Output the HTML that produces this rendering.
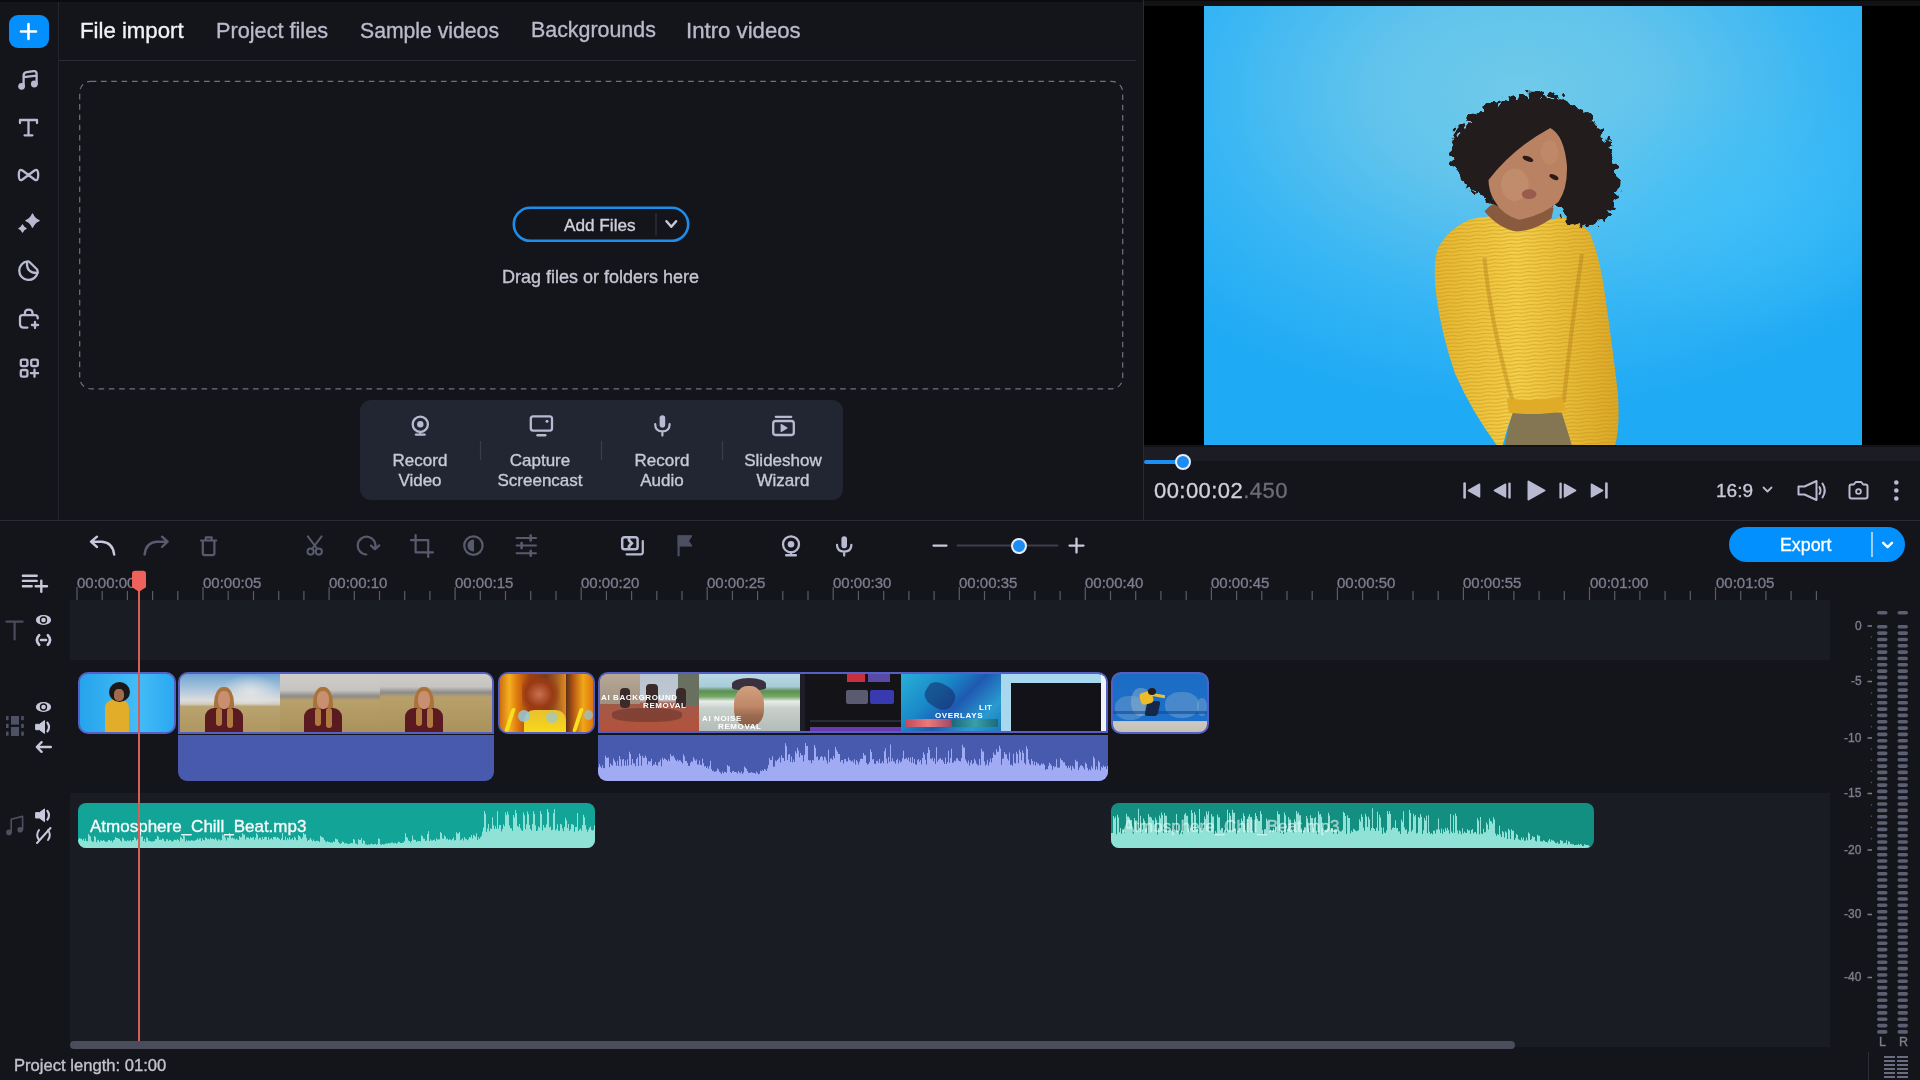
<!DOCTYPE html>
<html><head><meta charset="utf-8">
<style>
*{margin:0;padding:0;box-sizing:border-box}
html,body{width:1920px;height:1080px;overflow:hidden;background:#14151a;font-family:"Liberation Sans",sans-serif}
.a{position:absolute}
.ic{position:absolute;overflow:visible}
.t{position:absolute;white-space:pre;line-height:1;-webkit-text-stroke:0.35px currentColor;will-change:transform}
</style></head><body>
<!-- top strip -->
<div class="a" style="left:0;top:0;width:1920px;height:2px;background:#0b0b0e"></div>
<!-- sidebar separator -->
<div class="a" style="left:58px;top:2px;width:1px;height:518px;background:#24252c"></div>
<!-- tab underline -->
<div class="a" style="left:59px;top:60px;width:1077px;height:1px;background:#2b2d39"></div>
<!-- preview separator -->
<div class="a" style="left:1143px;top:0;width:1px;height:520px;background:#2a2b31"></div>
<!-- timeline separator -->
<div class="a" style="left:0;top:520px;width:1920px;height:1px;background:#2a2b33"></div>

<!-- SIDEBAR -->
<svg class="ic" style="left:0;top:0" width="58" height="400" fill="none" stroke="#b9bad2" stroke-width="2.3" stroke-linecap="round" stroke-linejoin="round">
<rect x="9" y="15" width="40" height="33" rx="9" fill="#0390fe" stroke="none"/>
<path d="M28.5 24V39M21 31.5H36" stroke="#fff" stroke-width="2.6"/>
<circle cx="21.6" cy="86.3" r="3.4" fill="#b9bad2" stroke="none"/>
<circle cx="34.3" cy="84" r="3.4" fill="#b9bad2" stroke="none"/>
<path d="M23.6 86V75.5Q23.6 72.6 26.6 72.2L33.6 71.2Q36.6 70.8 36.6 73.8V84M23.8 77.2L36.4 75.6"/>
<path d="M20 123V120H37V123M28.5 120V135.3M24.6 135.3H32.4"/>
<path d="M22.5 170.5L34.5 179.5Q38.2 182 38.2 175Q38.2 168 34.5 170.5L22.5 179.5Q18.8 182 18.8 175Q18.8 168 22.5 170.5Z"/>
<path d="M32.5 214Q34.3 218.8 39.1 220.6Q34.3 222.4 32.5 227.2Q30.7 222.4 25.9 220.6Q30.7 218.8 32.5 214Z" fill="#b9bad2" stroke-width="1.3"/>
<path d="M22.5 224.9Q23.6 227.4 26.1 228.5Q23.6 229.6 22.5 232.1Q21.4 229.6 18.9 228.5Q21.4 227.4 22.5 224.9Z" fill="#b9bad2" stroke-width="1.3"/>
<path d="M37.7 272.2A9.3 9.3 0 1 1 27.6 261.4Q28.6 261.2 29.5 262L36.9 269.3Q37.8 270.4 37.7 272.2Z"/>
<path d="M27 262.2Q26.4 273.4 37.4 273"/>
<path d="M27.4 327.6H23.8Q20 327.6 20 323.8V317.6Q20 315.2 22.4 315.2H35.2Q37.7 315.2 37.7 317.6V318.4M24.9 315V313.3Q24.9 309.7 28.7 309.7Q32.5 309.7 32.5 313.3V315M35 321.9V328.1M31.9 325H38.1"/>
<rect x="20.8" y="359.6" width="6.6" height="6.6" rx="1.6"/>
<rect x="31.2" y="359.6" width="6.6" height="6.6" rx="1.6"/>
<rect x="20.8" y="370" width="6.6" height="6.6" rx="1.6"/>
<path d="M34.5 369.6V376.8M30.9 373.2H38.1"/>
</svg>

<!-- TABS -->
<div class="t" style="left:80px;top:20px;font-size:22.2px;color:#f2f2f6">File import</div>
<div class="t" style="left:216px;top:20px;font-size:21.7px;color:#b9bacb">Project files</div>
<div class="t" style="left:360px;top:20px;font-size:21.2px;color:#b9bacb">Sample videos</div>
<div class="t" style="left:531px;top:20px;font-size:21.4px;color:#b9bacb">Backgrounds</div>
<div class="t" style="left:686px;top:20px;font-size:22.2px;color:#b9bacb">Intro videos</div>

<!-- DROP ZONE -->
<svg class="ic" style="left:0;top:0" width="1143" height="520">
<rect x="79.7" y="81.3" width="1043" height="307.5" rx="11" ry="11" fill="none" stroke="#70717d" stroke-width="1.2" stroke-dasharray="5.6 4.7"/>
<rect x="513.8" y="207.8" width="174.4" height="33" rx="16.5" fill="none" stroke="#1f8ce9" stroke-width="2.6"/>
<path d="M656 213V235.5" stroke="#3a3b46" stroke-width="1"/>
<path d="M666.5 221.3L671.3 226.8L676.1 221.3" fill="none" stroke="#c8c8d8" stroke-width="2.5" stroke-linecap="round" stroke-linejoin="round"/>
<rect x="360" y="400" width="483" height="100" rx="11" fill="#222632"/>
<path d="M480.5 441V460M601.5 441V460M722.5 441V460" stroke="#3a3d4a" stroke-width="1.2"/>
</svg>
<div class="t" style="left:564px;top:216.5px;font-size:17.2px;color:#d0d0dc">Add Files</div>
<div class="t" style="left:502px;top:268px;font-size:18px;color:#c4c5d3">Drag files or folders here</div>

<!-- RECORD BUTTONS -->
<svg class="ic" style="left:0;top:0" width="1143" height="520" fill="none" stroke="#b9bad2" stroke-linecap="round" stroke-linejoin="round">
<circle cx="420.3" cy="424.3" r="7.6" stroke-width="2.3"/>
<circle cx="420.3" cy="424.3" r="3.2" fill="#b9bad2" stroke="none"/>
<path d="M416 434.6H424.6" stroke-width="2.4"/>
<path d="M420.3 432V434" stroke-width="2"/>
<rect x="530.8" y="416.4" width="21.2" height="14.2" rx="2.4" stroke-width="2.3"/>
<circle cx="547" cy="421.2" r="1.5" fill="#b9bad2" stroke="none"/>
<path d="M537.5 435.2H545.3" stroke-width="2.4"/>
<rect x="659.6" y="415.2" width="5.6" height="12.4" rx="2.8" fill="#b9bad2" stroke="none"/>
<path d="M655.2 424.2Q655.2 431.4 662.4 431.4Q669.6 431.4 669.6 424.2M662.4 431.4V435.6" stroke-width="2.2"/>
<path d="M775.8 416.8H791.2" stroke-width="2.3"/>
<rect x="773.2" y="421" width="20.6" height="14" rx="2.4" stroke-width="2.3"/>
<path d="M781.2 424.6V431.4L787 428Z" fill="#b9bad2" stroke-width="1.2"/>
</svg>
<div class="t" style="left:380px;top:451px;width:80px;text-align:center;font-size:17px;line-height:20.3px;color:#c8c9d8;white-space:pre">Record
Video</div>
<div class="t" style="left:490px;top:451px;width:100px;text-align:center;font-size:17px;line-height:20.3px;color:#c8c9d8;white-space:pre">Capture
Screencast</div>
<div class="t" style="left:621.5px;top:451px;width:80px;text-align:center;font-size:17px;line-height:20.3px;color:#c8c9d8;white-space:pre">Record
Audio</div>
<div class="t" style="left:732.5px;top:451px;width:100px;text-align:center;font-size:17px;line-height:20.3px;color:#c8c9d8;white-space:pre">Slideshow
Wizard</div>
<!-- PREVIEW -->
<div class="a" style="left:1144px;top:0;width:776px;height:445px;background:#000"></div>
<div class="a" style="left:1144px;top:0;width:776px;height:6px;background:#131316"></div>
<div class="a" style="left:1144px;top:0;width:776px;height:1px;background:#08080a"></div>
<svg class="ic" style="left:1204px;top:6px" width="658" height="439" viewBox="0 0 1619 1080" preserveAspectRatio="none">
<defs>
<radialGradient id="bg1" cx="0.48" cy="0.2" r="0.72">
<stop offset="0" stop-color="#70caea"/>
<stop offset="0.3" stop-color="#62c4ec"/>
<stop offset="0.66" stop-color="#38b6f4"/>
<stop offset="1" stop-color="#1eaaf4"/>
</radialGradient>
<radialGradient id="bg2" cx="0.8" cy="0.45" r="0.3">
<stop offset="0" stop-color="#40c2fa" stop-opacity="0.6"/>
<stop offset="1" stop-color="#40c2fa" stop-opacity="0"/>
</radialGradient>
<filter id="curl" x="-10%" y="-10%" width="120%" height="120%">
<feTurbulence type="turbulence" baseFrequency="0.035" numOctaves="2" seed="3" result="n"/>
<feDisplacementMap in="SourceGraphic" in2="n" scale="38" xChannelSelector="R" yChannelSelector="G"/>
</filter>
<pattern id="knit" width="40" height="9" patternUnits="userSpaceOnUse" patternTransform="rotate(-4)">
<rect width="40" height="9" fill="none"/>
<path d="M0 6.5Q10 8.5 20 6.5T40 6.5" stroke="#b88a18" stroke-width="2.6" fill="none" opacity="0.45"/>
</pattern>
<linearGradient id="sw" x1="0" y1="0" x2="1" y2="0">
<stop offset="0" stop-color="#e6b630"/>
<stop offset="0.45" stop-color="#f6d04a"/>
<stop offset="1" stop-color="#dca826"/>
</linearGradient>
</defs>
<rect width="1619" height="1080" fill="url(#bg1)"/>
<rect width="1619" height="1080" fill="url(#bg2)"/>
<path d="M740 1080L760 990L890 985L905 1080Z" fill="#857653"/>
<path d="M655 525Q700 512 745 522Q800 548 880 518Q925 528 950 560Q975 620 988 720Q1005 840 1018 950Q1024 1030 1012 1080H905Q890 1030 880 1000L760 1000Q745 1040 735 1080H720Q660 1000 618 905Q585 810 572 715Q562 640 575 598Q600 548 655 525Z" fill="url(#sw)"/><path d="M655 525Q700 512 745 522Q800 548 880 518Q925 528 950 560Q975 620 988 720Q1005 840 1018 950Q1024 1030 1012 1080H905Q890 1030 880 1000L760 1000Q745 1040 735 1080H720Q660 1000 618 905Q585 810 572 715Q562 640 575 598Q600 548 655 525Z" fill="url(#knit)"/>
<path d="M690 620Q705 780 760 975" stroke="#a87414" stroke-width="10" fill="none" opacity="0.35"/><path d="M930 610Q905 780 885 975" stroke="#a87414" stroke-width="10" fill="none" opacity="0.35"/>
<path d="M750 1000Q815 1010 890 995L880 960Q815 975 745 965Z" fill="#e0ac28"/>
<path d="M690 505Q725 548 770 555Q815 552 855 522L860 498Q820 470 760 470Q712 478 690 505Z" fill="#8a5a3e"/>
<path filter="url(#curl)" d="M640 270Q690 232 760 212Q830 200 890 225Q945 255 978 310Q1005 365 1010 425Q1010 478 982 508Q950 530 915 530Q885 520 872 492Q850 470 820 470Q760 480 720 482Q680 472 640 440Q605 395 598 345Q605 300 640 270Z" fill="#241d1d"/>
<path d="M700 428Q760 350 852 300Q886 318 893 392Q895 450 872 482Q835 514 775 526Q735 515 715 480Q700 455 700 428Z" fill="#b98262"/><ellipse cx="765" cy="440" rx="34" ry="40" fill="#cc9a7a" opacity="0.45"/><ellipse cx="850" cy="360" rx="22" ry="30" fill="#c89070" opacity="0.4"/>
<ellipse cx="797" cy="376" rx="14" ry="6" transform="rotate(22 797 376)" fill="#2a1a18"/><ellipse cx="861" cy="421" rx="12" ry="5.5" transform="rotate(25 861 421)" fill="#2a1a18"/><ellipse cx="800" cy="463" rx="18" ry="12" fill="#9a5a4c"/>
</svg>
<!-- slider band -->
<div class="a" style="left:1144px;top:445px;width:776px;height:16px;background:#1c1d24"></div>
<div class="a" style="left:1144px;top:445px;width:776px;height:2px;background:#121318"></div>
<div class="a" style="left:1144px;top:460px;width:40px;height:3.5px;background:#1e8ff2;border-radius:2px"></div>
<div class="a" style="left:1175px;top:453.5px;width:16px;height:16px;border-radius:50%;background:#1a8cf3;border:2.5px solid #e8ecf6"></div>
<div class="t" style="left:1154px;top:480px;font-size:22px;letter-spacing:0.45px;color:#d0d0da">00:00:02<span style="color:#6b6c78">.450</span></div>
<svg class="ic" style="left:1440px;top:470px" width="480" height="45" fill="#b9bad2" stroke="#b9bad2" stroke-linecap="round" stroke-linejoin="round">
<path d="M24.6 13.6V27.4" stroke-width="2.6"/>
<path d="M39.5 14.2L28.5 20.5L39.5 26.8Z" stroke-width="1.6"/>
<path d="M65.5 14.2L54.5 20.5L65.5 26.8Z" stroke-width="1.6"/>
<path d="M69.5 13.6V27.4" stroke-width="2.4"/>
<path d="M88.5 11.5L104.5 20.5L88.5 29.5Z" stroke-width="2"/>
<path d="M120.6 13.6V27.4" stroke-width="2.4"/>
<path d="M124.5 14.2L135.5 20.5L124.5 26.8Z" stroke-width="1.6"/>
<path d="M151.5 14.2L162.5 20.5L151.5 26.8Z" stroke-width="1.6"/>
<path d="M166.4 13.6V27.4" stroke-width="2.6"/>
<path d="M323.5 17.5L327.5 21.5L331.5 17.5" fill="none" stroke-width="1.8"/>
<path d="M358.5 16.5H364.5L376.5 11V30L364.5 24.5H358.5Q358.5 20.5 358.5 16.5Z" fill="none" stroke-width="2"/>
<path d="M379.5 17Q381.5 20.5 379.5 24M382.5 13.5Q387 20.5 382.5 27.5" fill="none" stroke-width="2"/>
<path d="M409.5 16.5Q409.5 14.5 411.5 14.5H413.8L415.8 12H421.2L423.2 14.5H425.5Q427.5 14.5 427.5 16.5V26.5Q427.5 28.5 425.5 28.5H411.5Q409.5 28.5 409.5 26.5Z" fill="none" stroke-width="2"/>
<circle cx="418.5" cy="21.5" r="2.4" fill="none" stroke-width="1.8"/>
<circle cx="456.3" cy="12.5" r="2.3" stroke="none"/>
<circle cx="456.3" cy="20.5" r="2.3" stroke="none"/>
<circle cx="456.3" cy="28.5" r="2.3" stroke="none"/>
</svg>
<div class="t" style="left:1716px;top:481px;font-size:19px;color:#c8c9d8">16:9</div>

<!-- TIMELINE TOOLBAR -->
<svg class="ic" style="left:0;top:521px" width="1100" height="80" fill="none" stroke-linecap="round" stroke-linejoin="round">
<g transform="translate(0,-521)">
<path d="M97 536.7L91 541.7L97 547M91.5 541.7H102Q112.8 542.5 114.2 554.6" stroke="#c8c8dc" stroke-width="2.4"/>
<path d="M162 536.7L167.6 541.7L162 547M167 541.7H156.5Q145.8 542.5 144.6 554.6" stroke="#595a6e" stroke-width="2.4"/>
<path d="M201 540.5H216.2M205.8 540V537.3H211.6V540M202.8 540.5V553.3Q202.8 555.2 204.7 555.2H212.5Q214.4 555.2 214.4 553.3V540.5" stroke="#595a6e" stroke-width="2.2"/>
<circle cx="310.6" cy="551.6" r="3.1" stroke="#595a6e" stroke-width="2"/>
<circle cx="318.8" cy="551.6" r="3.1" stroke="#595a6e" stroke-width="2"/>
<path d="M307.8 536.3L317.4 549M321.6 536.3L312 549" stroke="#595a6e" stroke-width="2"/>
<path d="M366.3 554.5A8.9 8.9 0 1 1 375 548.6" stroke="#595a6e" stroke-width="2.2"/><path d="M371 545.6L375 549.2L379.3 545.4" stroke="#595a6e" stroke-width="2.2"/>
<path d="M415.6 535.2V552.3H433M411 540.2H428.2V557" stroke="#595a6e" stroke-width="2.2"/>
<circle cx="473.4" cy="545.6" r="9.2" stroke="#595a6e" stroke-width="2.2"/>
<path d="M473.4 540.2A5.4 5.4 0 0 0 473.4 551Z" fill="#595a6e" stroke="#595a6e" stroke-width="1.2"/>
<path d="M516.5 538H536M516.5 545.6H536M516.5 553.2H536" stroke="#595a6e" stroke-width="2"/>
<path d="M530.7 535.5V540.5M521.6 543.1V548.1M530.7 550.7V555.7" stroke="#595a6e" stroke-width="2.6"/>
<rect x="622.2" y="537.2" width="15.4" height="12" rx="2.3" stroke="#b9bad2" stroke-width="2.5"/>
<path d="M629 537.6V540.2L631.8 543.2L629 546.2V548.8" stroke="#b9bad2" stroke-width="2.8" stroke-linejoin="miter"/>
<path d="M626.6 554.3H640.8Q642.8 554.3 642.8 552.3V541" stroke="#b9bad2" stroke-width="2.2"/>
<path d="M678.6 555.5V536" stroke="#4c4e62" stroke-width="2.2"/>
<path d="M678.6 535.7H692L688.6 540.9L692 546.1H678.6Z" fill="#4c4e62" stroke="#4c4e62" stroke-width="1"/>
<circle cx="791" cy="544.3" r="8" stroke="#b9bad2" stroke-width="2.3"/>
<circle cx="791" cy="544.3" r="3.3" fill="#b9bad2" stroke="none"/>
<path d="M786.2 555.2H795.8" stroke="#b9bad2" stroke-width="2.4"/>
<path d="M791 552V555" stroke="#b9bad2" stroke-width="2"/>
<rect x="841.4" y="536.2" width="5.6" height="12" rx="2.8" fill="#b9bad2" stroke="none"/>
<path d="M837 544.8Q837 551.6 844.2 551.6Q851.4 551.6 851.4 544.8M844.2 551.6V555.6" stroke="#b9bad2" stroke-width="2.2"/>
<path d="M933.5 545.6H946.5" stroke="#c8c8dc" stroke-width="2.3"/>
<path d="M957.5 545.6H1057.5" stroke="#3c3e4a" stroke-width="2"/>
<path d="M1069.5 545.6H1083.5M1076.5 538.6V552.6" stroke="#c8c8dc" stroke-width="2.3"/>
<path d="M22.9 575.8H36.7M22.9 580.9H36.7M22.9 586.2H31.7M35.7 586.2H47M41.3 580.6V591.8" stroke="#c8c8dc" stroke-width="2.4"/>
</g>
</svg>
<div class="a" style="left:1010.5px;top:537.5px;width:16.5px;height:16.5px;border-radius:50%;background:#1a8cf3;border:2.5px solid #e8ecf6"></div>
<!-- export -->
<div class="a" style="left:1729px;top:527px;width:176px;height:35px;border-radius:18px;background:#0190fe"></div>
<div class="a" style="left:1871px;top:532px;width:1.8px;height:25px;background:#9ccffb"></div>
<div class="t" style="left:1780px;top:536.5px;font-size:17.8px;color:#fff">Export</div>
<svg class="ic" style="left:1880px;top:538px" width="20" height="14" fill="none"><path d="M3.2 4.8L7.6 9.2L12 4.8" stroke="#fff" stroke-width="2.4" stroke-linecap="round" stroke-linejoin="round"/></svg>
<!-- RULER -->
<div class="t" style="left:77.0px;top:575px;font-size:15px;color:#7c7d8f">00:00:00</div>
<div class="t" style="left:203.0px;top:575px;font-size:15px;color:#7c7d8f">00:00:05</div>
<div class="t" style="left:329.1px;top:575px;font-size:15px;color:#7c7d8f">00:00:10</div>
<div class="t" style="left:455.1px;top:575px;font-size:15px;color:#7c7d8f">00:00:15</div>
<div class="t" style="left:581.2px;top:575px;font-size:15px;color:#7c7d8f">00:00:20</div>
<div class="t" style="left:707.2px;top:575px;font-size:15px;color:#7c7d8f">00:00:25</div>
<div class="t" style="left:833.2px;top:575px;font-size:15px;color:#7c7d8f">00:00:30</div>
<div class="t" style="left:959.3px;top:575px;font-size:15px;color:#7c7d8f">00:00:35</div>
<div class="t" style="left:1085.3px;top:575px;font-size:15px;color:#7c7d8f">00:00:40</div>
<div class="t" style="left:1211.4px;top:575px;font-size:15px;color:#7c7d8f">00:00:45</div>
<div class="t" style="left:1337.4px;top:575px;font-size:15px;color:#7c7d8f">00:00:50</div>
<div class="t" style="left:1463.4px;top:575px;font-size:15px;color:#7c7d8f">00:00:55</div>
<div class="t" style="left:1589.5px;top:575px;font-size:15px;color:#7c7d8f">00:01:00</div>
<div class="t" style="left:1715.5px;top:575px;font-size:15px;color:#7c7d8f">00:01:05</div>
<svg class="ic" style="left:0;top:0" width="1920" height="1080"><path d="M77.0 587V600M102.2 591V600M127.4 591V600M152.6 591V600M177.8 591V600M203.0 587V600M228.2 591V600M253.5 591V600M278.7 591V600M303.9 591V600M329.1 587V600M354.3 591V600M379.5 591V600M404.7 591V600M429.9 591V600M455.1 587V600M480.3 591V600M505.5 591V600M530.7 591V600M556.0 591V600M581.2 587V600M606.4 591V600M631.6 591V600M656.8 591V600M682.0 591V600M707.2 587V600M732.4 591V600M757.6 591V600M782.8 591V600M808.0 591V600M833.2 587V600M858.4 591V600M883.7 591V600M908.9 591V600M934.1 591V600M959.3 587V600M984.5 591V600M1009.7 591V600M1034.9 591V600M1060.1 591V600M1085.3 587V600M1110.5 591V600M1135.7 591V600M1160.9 591V600M1186.2 591V600M1211.4 587V600M1236.6 591V600M1261.8 591V600M1287.0 591V600M1312.2 591V600M1337.4 587V600M1362.6 591V600M1387.8 591V600M1413.0 591V600M1438.2 591V600M1463.4 587V600M1488.6 591V600M1513.9 591V600M1539.1 591V600M1564.3 591V600M1589.5 587V600M1614.7 591V600M1639.9 591V600M1665.1 591V600M1690.3 591V600M1715.5 587V600M1740.7 591V600M1765.9 591V600M1791.1 591V600M1816.4 591V600" stroke="#5a5b68" stroke-width="1.2"/></svg>
<!-- TRACK BGS -->
<div class="a" style="left:70px;top:600px;width:1760px;height:60px;background:#1a1c23"></div>
<div class="a" style="left:70px;top:793px;width:1760px;height:254px;background:#1a1c23"></div>
<div class="a" style="left:70px;top:1041px;width:1445px;height:7.5px;border-radius:4px;background:#4a4d5b"></div>
<div class="t" style="left:14px;top:1057.5px;font-size:16.6px;color:#c4c4cc">Project length: 01:00</div>
<!-- CLIPS -->
<!-- clip2 audio -->
<div class="a" style="left:178px;top:735px;width:316px;height:46px;background:#475aae;border-radius:0 0 9px 9px"></div>
<!-- clip4 audio -->
<div class="a" style="left:598px;top:735px;width:510px;height:46px;background:#475aae;border-radius:0 0 9px 9px;overflow:hidden"></div>
<!-- teal audio -->
<div class="a" style="left:78px;top:803px;width:517px;height:45px;background:#12a497;border-radius:8px"></div>
<div class="a" style="left:1111px;top:803px;width:483px;height:45px;background:#138f81;border-radius:8px"></div>
<svg class="ic" style="left:0;top:0" width="1920" height="1080">
<defs>
<clipPath id="c4"><rect x="598" y="735" width="510" height="46" rx="9"/></clipPath>
<clipPath id="ct1"><rect x="78" y="803" width="517" height="45" rx="8"/></clipPath>
<clipPath id="ct2"><rect x="1111" y="803" width="483" height="45" rx="8"/></clipPath>
</defs>
<path d="M598.0 781L598.0 767.3L599.0 767.3L599.0 764.3L600.0 764.3L600.0 766.4L601.0 766.4L601.0 768.1L602.0 768.1L602.0 765.2L603.0 765.2L603.0 768.2L604.0 768.2L604.0 768.0L605.0 768.0L605.0 755.8L606.0 755.8L606.0 757.8L607.0 757.8L607.0 757.8L608.0 757.8L608.0 757.5L609.0 757.5L609.0 767.3L610.0 767.3L610.0 763.2L611.0 763.2L611.0 764.9L612.0 764.9L612.0 765.5L613.0 765.5L613.0 758.6L614.0 758.6L614.0 760.4L615.0 760.4L615.0 762.2L616.0 762.2L616.0 765.7L617.0 765.7L617.0 760.7L618.0 760.7L618.0 766.1L619.0 766.1L619.0 756.0L620.0 756.0L620.0 759.3L621.0 759.3L621.0 766.3L622.0 766.3L622.0 759.6L623.0 759.6L623.0 759.1L624.0 759.1L624.0 765.8L625.0 765.8L625.0 760.6L626.0 760.6L626.0 765.7L627.0 765.7L627.0 759.2L628.0 759.2L628.0 765.4L629.0 765.4L629.0 751.7L630.0 751.7L630.0 754.0L631.0 754.0L631.0 764.9L632.0 764.9L632.0 759.1L633.0 759.1L633.0 763.2L634.0 763.2L634.0 763.4L635.0 763.4L635.0 766.3L636.0 766.3L636.0 759.1L637.0 759.1L637.0 757.2L638.0 757.2L638.0 766.0L639.0 766.0L639.0 753.5L640.0 753.5L640.0 755.7L641.0 755.7L641.0 765.8L642.0 765.8L642.0 755.7L643.0 755.7L643.0 757.8L644.0 757.8L644.0 757.8L645.0 757.8L645.0 755.6L646.0 755.6L646.0 757.7L647.0 757.7L647.0 764.6L648.0 764.6L648.0 761.0L649.0 761.0L649.0 761.7L650.0 761.7L650.0 761.3L651.0 761.3L651.0 758.7L652.0 758.7L652.0 766.0L653.0 766.0L653.0 764.5L654.0 764.5L654.0 764.4L655.0 764.4L655.0 761.9L656.0 761.9L656.0 765.0L657.0 765.0L657.0 765.8L658.0 765.8L658.0 762.2L659.0 762.2L659.0 761.8L660.0 761.8L660.0 759.6L661.0 759.6L661.0 766.2L662.0 766.2L662.0 757.8L663.0 757.8L663.0 759.7L664.0 759.7L664.0 758.2L665.0 758.2L665.0 759.1L666.0 759.1L666.0 760.0L667.0 760.0L667.0 761.2L668.0 761.2L668.0 759.3L669.0 759.3L669.0 761.0L670.0 761.0L670.0 754.0L671.0 754.0L671.0 756.2L672.0 756.2L672.0 756.2L673.0 756.2L673.0 755.6L674.0 755.6L674.0 757.7L675.0 757.7L675.0 759.7L676.0 759.7L676.0 761.1L677.0 761.1L677.0 759.6L678.0 759.6L678.0 761.3L679.0 761.3L679.0 759.9L680.0 759.9L680.0 760.5L681.0 760.5L681.0 762.1L682.0 762.1L682.0 763.5L683.0 763.5L683.0 754.3L684.0 754.3L684.0 756.4L685.0 756.4L685.0 760.9L686.0 760.9L686.0 760.9L687.0 760.9L687.0 763.1L688.0 763.1L688.0 765.7L689.0 765.7L689.0 766.1L690.0 766.1L690.0 762.8L691.0 762.8L691.0 761.2L692.0 761.2L692.0 761.8L693.0 761.8L693.0 757.3L694.0 757.3L694.0 759.2L695.0 759.2L695.0 760.8L696.0 760.8L696.0 759.5L697.0 759.5L697.0 764.5L698.0 764.5L698.0 764.5L699.0 764.5L699.0 760.4L700.0 760.4L700.0 764.8L701.0 764.8L701.0 765.3L702.0 765.3L702.0 758.4L703.0 758.4L703.0 763.2L704.0 763.2L704.0 766.6L705.0 766.6L705.0 766.1L706.0 766.1L706.0 768.1L707.0 768.1L707.0 766.4L708.0 766.4L708.0 768.7L709.0 768.7L709.0 766.0L710.0 766.0L710.0 760.8L711.0 760.8L711.0 768.9L712.0 768.9L712.0 770.9L713.0 770.9L713.0 770.7L714.0 770.7L714.0 772.0L715.0 772.0L715.0 771.3L716.0 771.3L716.0 771.3L717.0 771.3L717.0 768.5L718.0 768.5L718.0 769.5L719.0 769.5L719.0 771.7L720.0 771.7L720.0 772.4L721.0 772.4L721.0 774.1L722.0 774.1L722.0 771.6L723.0 771.6L723.0 773.2L724.0 773.2L724.0 771.7L725.0 771.7L725.0 772.1L726.0 772.1L726.0 772.8L727.0 772.8L727.0 765.1L728.0 765.1L728.0 766.3L729.0 766.3L729.0 766.3L730.0 766.3L730.0 772.1L731.0 772.1L731.0 773.0L732.0 773.0L732.0 771.3L733.0 771.3L733.0 771.1L734.0 771.1L734.0 772.1L735.0 772.1L735.0 771.9L736.0 771.9L736.0 772.2L737.0 772.2L737.0 773.6L738.0 773.6L738.0 771.1L739.0 771.1L739.0 772.6L740.0 772.6L740.0 773.3L741.0 773.3L741.0 771.6L742.0 771.6L742.0 774.1L743.0 774.1L743.0 772.6L744.0 772.6L744.0 766.4L745.0 766.4L745.0 767.7L746.0 767.7L746.0 768.7L747.0 768.7L747.0 771.2L748.0 771.2L748.0 772.8L749.0 772.8L749.0 773.1L750.0 773.1L750.0 772.7L751.0 772.7L751.0 772.1L752.0 772.1L752.0 772.8L753.0 772.8L753.0 772.8L754.0 772.8L754.0 773.0L755.0 773.0L755.0 773.8L756.0 773.8L756.0 771.6L757.0 771.6L757.0 772.7L758.0 772.7L758.0 774.2L759.0 774.2L759.0 773.8L760.0 773.8L760.0 770.5L761.0 770.5L761.0 771.3L762.0 771.3L762.0 769.9L763.0 769.9L763.0 770.9L764.0 770.9L764.0 768.9L765.0 768.9L765.0 769.5L766.0 769.5L766.0 770.9L767.0 770.9L767.0 768.5L768.0 768.5L768.0 765.0L769.0 765.0L769.0 758.1L770.0 758.1L770.0 759.9L771.0 759.9L771.0 759.9L772.0 759.9L772.0 756.2L773.0 756.2L773.0 766.8L774.0 766.8L774.0 766.4L775.0 766.4L775.0 760.4L776.0 760.4L776.0 761.3L777.0 761.3L777.0 759.9L778.0 759.9L778.0 758.7L779.0 758.7L779.0 757.2L780.0 757.2L780.0 762.6L781.0 762.6L781.0 755.3L782.0 755.3L782.0 758.0L783.0 758.0L783.0 758.0L784.0 758.0L784.0 760.9L785.0 760.9L785.0 743.2L786.0 743.2L786.0 746.2L787.0 746.2L787.0 760.1L788.0 760.1L788.0 754.7L789.0 754.7L789.0 754.1L790.0 754.1L790.0 761.9L791.0 761.9L791.0 756.6L792.0 756.6L792.0 762.2L793.0 762.2L793.0 759.4L794.0 759.4L794.0 762.0L795.0 762.0L795.0 751.2L796.0 751.2L796.0 753.6L797.0 753.6L797.0 747.8L798.0 747.8L798.0 750.5L799.0 750.5L799.0 757.2L800.0 757.2L800.0 753.0L801.0 753.0L801.0 755.3L802.0 755.3L802.0 755.3L803.0 755.3L803.0 761.6L804.0 761.6L804.0 754.7L805.0 754.7L805.0 743.0L806.0 743.0L806.0 746.1L807.0 746.1L807.0 746.1L808.0 746.1L808.0 760.1L809.0 760.1L809.0 760.5L810.0 760.5L810.0 760.3L811.0 760.3L811.0 763.3L812.0 763.3L812.0 760.1L813.0 760.1L813.0 760.5L814.0 760.5L814.0 744.9L815.0 744.9L815.0 747.8L816.0 747.8L816.0 756.8L817.0 756.8L817.0 756.4L818.0 756.4L818.0 760.3L819.0 760.3L819.0 759.5L820.0 759.5L820.0 756.9L821.0 756.9L821.0 756.1L822.0 756.1L822.0 757.3L823.0 757.3L823.0 760.5L824.0 760.5L824.0 756.5L825.0 756.5L825.0 757.5L826.0 757.5L826.0 760.6L827.0 760.6L827.0 763.4L828.0 763.4L828.0 749.8L829.0 749.8L829.0 762.1L830.0 762.1L830.0 758.5L831.0 758.5L831.0 758.6L832.0 758.6L832.0 759.7L833.0 759.7L833.0 755.8L834.0 755.8L834.0 758.3L835.0 758.3L835.0 747.1L836.0 747.1L836.0 749.8L837.0 749.8L837.0 751.7L838.0 751.7L838.0 754.0L839.0 754.0L839.0 754.0L840.0 754.0L840.0 762.1L841.0 762.1L841.0 759.9L842.0 759.9L842.0 760.1L843.0 760.1L843.0 763.6L844.0 763.6L844.0 759.2L845.0 759.2L845.0 759.0L846.0 759.0L846.0 761.4L847.0 761.4L847.0 761.4L848.0 761.4L848.0 757.6L849.0 757.6L849.0 759.7L850.0 759.7L850.0 760.6L851.0 760.6L851.0 761.4L852.0 761.4L852.0 760.4L853.0 760.4L853.0 762.5L854.0 762.5L854.0 759.3L855.0 759.3L855.0 764.6L856.0 764.6L856.0 760.0L857.0 760.0L857.0 761.5L858.0 761.5L858.0 764.4L859.0 764.4L859.0 761.7L860.0 761.7L860.0 759.1L861.0 759.1L861.0 758.5L862.0 758.5L862.0 759.1L863.0 759.1L863.0 752.9L864.0 752.9L864.0 755.2L865.0 755.2L865.0 755.2L866.0 755.2L866.0 762.9L867.0 762.9L867.0 764.5L868.0 764.5L868.0 764.0L869.0 764.0L869.0 762.0L870.0 762.0L870.0 749.5L871.0 749.5L871.0 752.0L872.0 752.0L872.0 759.4L873.0 759.4L873.0 758.9L874.0 758.9L874.0 763.8L875.0 763.8L875.0 763.9L876.0 763.9L876.0 760.9L877.0 760.9L877.0 760.8L878.0 760.8L878.0 762.7L879.0 762.7L879.0 759.1L880.0 759.1L880.0 763.4L881.0 763.4L881.0 763.0L882.0 763.0L882.0 760.9L883.0 760.9L883.0 763.3L884.0 763.3L884.0 751.2L885.0 751.2L885.0 748.2L886.0 748.2L886.0 758.8L887.0 758.8L887.0 763.6L888.0 763.6L888.0 757.0L889.0 757.0L889.0 762.0L890.0 762.0L890.0 744.6L891.0 744.6L891.0 761.3L892.0 761.3L892.0 758.2L893.0 758.2L893.0 761.3L894.0 761.3L894.0 761.8L895.0 761.8L895.0 763.7L896.0 763.7L896.0 760.1L897.0 760.1L897.0 758.8L898.0 758.8L898.0 763.4L899.0 763.4L899.0 760.2L900.0 760.2L900.0 762.3L901.0 762.3L901.0 761.4L902.0 761.4L902.0 758.3L903.0 758.3L903.0 750.7L904.0 750.7L904.0 759.3L905.0 759.3L905.0 758.7L906.0 758.7L906.0 757.8L907.0 757.8L907.0 759.6L908.0 759.6L908.0 757.6L909.0 757.6L909.0 761.4L910.0 761.4L910.0 757.6L911.0 757.6L911.0 762.7L912.0 762.7L912.0 756.9L913.0 756.9L913.0 763.1L914.0 763.1L914.0 759.0L915.0 759.0L915.0 764.2L916.0 764.2L916.0 764.7L917.0 764.7L917.0 760.2L918.0 760.2L918.0 759.0L919.0 759.0L919.0 761.8L920.0 761.8L920.0 760.1L921.0 760.1L921.0 764.2L922.0 764.2L922.0 758.1L923.0 758.1L923.0 752.3L924.0 752.3L924.0 754.6L925.0 754.6L925.0 759.7L926.0 759.7L926.0 764.5L927.0 764.5L927.0 753.1L928.0 753.1L928.0 747.2L929.0 747.2L929.0 749.9L930.0 749.9L930.0 758.5L931.0 758.5L931.0 759.3L932.0 759.3L932.0 757.8L933.0 757.8L933.0 761.4L934.0 761.4L934.0 758.6L935.0 758.6L935.0 764.0L936.0 764.0L936.0 747.3L937.0 747.3L937.0 761.8L938.0 761.8L938.0 759.8L939.0 759.8L939.0 758.7L940.0 758.7L940.0 758.1L941.0 758.1L941.0 760.1L942.0 760.1L942.0 759.5L943.0 759.5L943.0 761.8L944.0 761.8L944.0 764.0L945.0 764.0L945.0 757.4L946.0 757.4L946.0 763.9L947.0 763.9L947.0 761.9L948.0 761.9L948.0 750.7L949.0 750.7L949.0 762.8L950.0 762.8L950.0 758.0L951.0 758.0L951.0 748.8L952.0 748.8L952.0 762.8L953.0 762.8L953.0 762.5L954.0 762.5L954.0 760.6L955.0 760.6L955.0 761.3L956.0 761.3L956.0 758.3L957.0 758.3L957.0 758.2L958.0 758.2L958.0 760.4L959.0 760.4L959.0 761.0L960.0 761.0L960.0 761.6L961.0 761.6L961.0 757.9L962.0 757.9L962.0 744.7L963.0 744.7L963.0 747.6L964.0 747.6L964.0 747.6L965.0 747.6L965.0 759.2L966.0 759.2L966.0 761.3L967.0 761.3L967.0 763.3L968.0 763.3L968.0 760.4L969.0 760.4L969.0 765.4L970.0 765.4L970.0 762.6L971.0 762.6L971.0 760.0L972.0 760.0L972.0 764.3L973.0 764.3L973.0 763.0L974.0 763.0L974.0 758.8L975.0 758.8L975.0 760.6L976.0 760.6L976.0 763.5L977.0 763.5L977.0 764.4L978.0 764.4L978.0 765.6L979.0 765.6L979.0 759.1L980.0 759.1L980.0 765.0L981.0 765.0L981.0 748.8L982.0 748.8L982.0 751.4L983.0 751.4L983.0 751.4L984.0 751.4L984.0 761.5L985.0 761.5L985.0 765.5L986.0 765.5L986.0 764.2L987.0 764.2L987.0 759.7L988.0 759.7L988.0 765.4L989.0 765.4L989.0 761.9L990.0 761.9L990.0 758.4L991.0 758.4L991.0 762.6L992.0 762.6L992.0 758.1L993.0 758.1L993.0 752.5L994.0 752.5L994.0 754.8L995.0 754.8L995.0 754.8L996.0 754.8L996.0 749.2L997.0 749.2L997.0 751.7L998.0 751.7L998.0 751.7L999.0 751.7L999.0 745.7L1000.0 745.7L1000.0 748.5L1001.0 748.5L1001.0 764.7L1002.0 764.7L1002.0 758.8L1003.0 758.8L1003.0 758.6L1004.0 758.6L1004.0 752.0L1005.0 752.0L1005.0 754.3L1006.0 754.3L1006.0 754.3L1007.0 754.3L1007.0 758.8L1008.0 758.8L1008.0 760.5L1009.0 760.5L1009.0 752.5L1010.0 752.5L1010.0 765.0L1011.0 765.0L1011.0 764.6L1012.0 764.6L1012.0 765.7L1013.0 765.7L1013.0 753.7L1014.0 753.7L1014.0 762.7L1015.0 762.7L1015.0 763.4L1016.0 763.4L1016.0 751.8L1017.0 751.8L1017.0 754.1L1018.0 754.1L1018.0 763.2L1019.0 763.2L1019.0 749.7L1020.0 749.7L1020.0 752.2L1021.0 752.2L1021.0 760.2L1022.0 760.2L1022.0 750.4L1023.0 750.4L1023.0 752.9L1024.0 752.9L1024.0 762.8L1025.0 762.8L1025.0 764.6L1026.0 764.6L1026.0 746.3L1027.0 746.3L1027.0 749.1L1028.0 749.1L1028.0 759.5L1029.0 759.5L1029.0 763.6L1030.0 763.6L1030.0 765.1L1031.0 765.1L1031.0 758.9L1032.0 758.9L1032.0 760.9L1033.0 760.9L1033.0 764.8L1034.0 764.8L1034.0 761.6L1035.0 761.6L1035.0 765.6L1036.0 765.6L1036.0 762.0L1037.0 762.0L1037.0 763.8L1038.0 763.8L1038.0 763.6L1039.0 763.6L1039.0 765.4L1040.0 765.4L1040.0 765.3L1041.0 765.3L1041.0 763.4L1042.0 763.4L1042.0 764.3L1043.0 764.3L1043.0 763.3L1044.0 763.3L1044.0 765.0L1045.0 765.0L1045.0 769.9L1046.0 769.9L1046.0 769.0L1047.0 769.0L1047.0 769.2L1048.0 769.2L1048.0 766.1L1049.0 766.1L1049.0 762.8L1050.0 762.8L1050.0 764.2L1051.0 764.2L1051.0 765.6L1052.0 765.6L1052.0 769.8L1053.0 769.8L1053.0 766.1L1054.0 766.1L1054.0 767.3L1055.0 767.3L1055.0 766.5L1056.0 766.5L1056.0 759.2L1057.0 759.2L1057.0 767.5L1058.0 767.5L1058.0 767.8L1059.0 767.8L1059.0 767.5L1060.0 767.5L1060.0 758.2L1061.0 758.2L1061.0 760.0L1062.0 760.0L1062.0 760.5L1063.0 760.5L1063.0 762.2L1064.0 762.2L1064.0 762.2L1065.0 762.2L1065.0 765.3L1066.0 765.3L1066.0 766.0L1067.0 766.0L1067.0 768.2L1068.0 768.2L1068.0 765.7L1069.0 765.7L1069.0 767.7L1070.0 767.7L1070.0 765.8L1071.0 765.8L1071.0 770.2L1072.0 770.2L1072.0 765.8L1073.0 765.8L1073.0 767.4L1074.0 767.4L1074.0 768.9L1075.0 768.9L1075.0 759.8L1076.0 759.8L1076.0 761.5L1077.0 761.5L1077.0 761.5L1078.0 761.5L1078.0 769.9L1079.0 769.9L1079.0 767.6L1080.0 767.6L1080.0 765.6L1081.0 765.6L1081.0 765.3L1082.0 765.3L1082.0 765.9L1083.0 765.9L1083.0 767.6L1084.0 767.6L1084.0 769.6L1085.0 769.6L1085.0 762.5L1086.0 762.5L1086.0 764.0L1087.0 764.0L1087.0 767.7L1088.0 767.7L1088.0 770.5L1089.0 770.5L1089.0 768.9L1090.0 768.9L1090.0 770.2L1091.0 770.2L1091.0 766.2L1092.0 766.2L1092.0 768.6L1093.0 768.6L1093.0 756.5L1094.0 756.5L1094.0 758.5L1095.0 758.5L1095.0 769.7L1096.0 769.7L1096.0 766.4L1097.0 766.4L1097.0 769.4L1098.0 769.4L1098.0 760.7L1099.0 760.7L1099.0 762.3L1100.0 762.3L1100.0 770.4L1101.0 770.4L1101.0 766.8L1102.0 766.8L1102.0 767.7L1103.0 767.7L1103.0 765.5L1104.0 765.5L1104.0 767.1L1105.0 767.1L1105.0 766.2L1106.0 766.2L1106.0 769.1L1107.0 769.1L1107.0 765.9L1108.0 765.9L1108.0 765.5L1109.0 765.5L1108.0 781Z" fill="#a0abf4" clip-path="url(#c4)"/>
<path d="M78.0 848L78.0 839.5L79.0 839.5L79.0 838.1L80.0 838.1L80.0 838.8L81.0 838.8L81.0 838.8L82.0 838.8L82.0 840.3L83.0 840.3L83.0 838.8L84.0 838.8L84.0 841.1L85.0 841.1L85.0 838.4L86.0 838.4L86.0 841.1L87.0 841.1L87.0 841.3L88.0 841.3L88.0 834.0L89.0 834.0L89.0 835.5L90.0 835.5L90.0 836.5L91.0 836.5L91.0 840.8L92.0 840.8L92.0 841.7L93.0 841.7L93.0 841.7L94.0 841.7L94.0 835.9L95.0 835.9L95.0 836.9L96.0 836.9L96.0 842.3L97.0 842.3L97.0 840.3L98.0 840.3L98.0 839.8L99.0 839.8L99.0 841.9L100.0 841.9L100.0 840.5L101.0 840.5L101.0 840.5L102.0 840.5L102.0 840.9L103.0 840.9L103.0 839.9L104.0 839.9L104.0 840.8L105.0 840.8L105.0 841.8L106.0 841.8L106.0 841.8L107.0 841.8L107.0 841.6L108.0 841.6L108.0 840.1L109.0 840.1L109.0 840.0L110.0 840.0L110.0 840.9L111.0 840.9L111.0 840.6L112.0 840.6L112.0 842.2L113.0 842.2L113.0 840.2L114.0 840.2L114.0 839.7L115.0 839.7L115.0 837.0L116.0 837.0L116.0 837.9L117.0 837.9L117.0 837.9L118.0 837.9L118.0 838.4L119.0 838.4L119.0 839.1L120.0 839.1L120.0 840.6L121.0 840.6L121.0 841.5L122.0 841.5L122.0 837.6L123.0 837.6L123.0 838.4L124.0 838.4L124.0 840.7L125.0 840.7L125.0 840.7L126.0 840.7L126.0 841.4L127.0 841.4L127.0 840.2L128.0 840.2L128.0 840.8L129.0 840.8L129.0 840.7L130.0 840.7L130.0 840.0L131.0 840.0L131.0 841.7L132.0 841.7L132.0 840.3L133.0 840.3L133.0 839.9L134.0 839.9L134.0 837.1L135.0 837.1L135.0 838.0L136.0 838.0L136.0 840.4L137.0 840.4L137.0 839.3L138.0 839.3L138.0 840.0L139.0 840.0L139.0 839.1L140.0 839.1L140.0 835.4L141.0 835.4L141.0 836.4L142.0 836.4L142.0 836.4L143.0 836.4L143.0 840.9L144.0 840.9L144.0 839.1L145.0 839.1L145.0 841.9L146.0 841.9L146.0 837.3L147.0 837.3L147.0 838.1L148.0 838.1L148.0 840.8L149.0 840.8L149.0 840.8L150.0 840.8L150.0 841.3L151.0 841.3L151.0 841.4L152.0 841.4L152.0 841.4L153.0 841.4L153.0 841.3L154.0 841.3L154.0 841.0L155.0 841.0L155.0 838.9L156.0 838.9L156.0 839.3L157.0 839.3L157.0 835.8L158.0 835.8L158.0 836.8L159.0 836.8L159.0 840.0L160.0 840.0L160.0 839.6L161.0 839.6L161.0 840.1L162.0 840.1L162.0 838.2L163.0 838.2L163.0 839.0L164.0 839.0L164.0 841.1L165.0 841.1L165.0 841.5L166.0 841.5L166.0 839.2L167.0 839.2L167.0 839.2L168.0 839.2L168.0 841.0L169.0 841.0L169.0 839.7L170.0 839.7L170.0 839.9L171.0 839.9L171.0 841.2L172.0 841.2L172.0 841.4L173.0 841.4L173.0 840.5L174.0 840.5L174.0 839.6L175.0 839.6L175.0 840.0L176.0 840.0L176.0 840.3L177.0 840.3L177.0 839.0L178.0 839.0L178.0 840.0L179.0 840.0L179.0 841.3L180.0 841.3L180.0 836.8L181.0 836.8L181.0 837.7L182.0 837.7L182.0 839.0L183.0 839.0L183.0 835.2L184.0 835.2L184.0 836.2L185.0 836.2L185.0 841.4L186.0 841.4L186.0 839.8L187.0 839.8L187.0 841.2L188.0 841.2L188.0 840.3L189.0 840.3L189.0 840.7L190.0 840.7L190.0 841.1L191.0 841.1L191.0 839.9L192.0 839.9L192.0 840.5L193.0 840.5L193.0 840.7L194.0 840.7L194.0 840.8L195.0 840.8L195.0 840.2L196.0 840.2L196.0 839.7L197.0 839.7L197.0 838.3L198.0 838.3L198.0 839.7L199.0 839.7L199.0 838.5L200.0 838.5L200.0 838.2L201.0 838.2L201.0 840.9L202.0 840.9L202.0 838.2L203.0 838.2L203.0 840.0L204.0 840.0L204.0 840.2L205.0 840.2L205.0 837.3L206.0 837.3L206.0 838.1L207.0 838.1L207.0 839.2L208.0 839.2L208.0 838.8L209.0 838.8L209.0 839.5L210.0 839.5L210.0 837.8L211.0 837.8L211.0 839.1L212.0 839.1L212.0 838.4L213.0 838.4L213.0 838.9L214.0 838.9L214.0 839.6L215.0 839.6L215.0 838.1L216.0 838.1L216.0 839.6L217.0 839.6L217.0 840.8L218.0 840.8L218.0 839.2L219.0 839.2L219.0 839.6L220.0 839.6L220.0 840.4L221.0 840.4L221.0 840.1L222.0 840.1L222.0 834.5L223.0 834.5L223.0 835.6L224.0 835.6L224.0 835.6L225.0 835.6L225.0 837.7L226.0 837.7L226.0 840.5L227.0 840.5L227.0 837.6L228.0 837.6L228.0 837.8L229.0 837.8L229.0 833.0L230.0 833.0L230.0 834.2L231.0 834.2L231.0 838.2L232.0 838.2L232.0 837.6L233.0 837.6L233.0 838.4L234.0 838.4L234.0 838.5L235.0 838.5L235.0 839.5L236.0 839.5L236.0 838.6L237.0 838.6L237.0 839.6L238.0 839.6L238.0 839.9L239.0 839.9L239.0 836.0L240.0 836.0L240.0 837.2L241.0 837.2L241.0 837.3L242.0 837.3L242.0 833.3L243.0 833.3L243.0 834.5L244.0 834.5L244.0 834.5L245.0 834.5L245.0 839.4L246.0 839.4L246.0 837.3L247.0 837.3L247.0 837.6L248.0 837.6L248.0 837.6L249.0 837.6L249.0 839.0L250.0 839.0L250.0 837.1L251.0 837.1L251.0 838.1L252.0 838.1L252.0 837.6L253.0 837.6L253.0 837.1L254.0 837.1L254.0 839.8L255.0 839.8L255.0 837.7L256.0 837.7L256.0 833.3L257.0 833.3L257.0 834.5L258.0 834.5L258.0 839.3L259.0 839.3L259.0 837.7L260.0 837.7L260.0 837.7L261.0 837.7L261.0 839.7L262.0 839.7L262.0 836.9L263.0 836.9L263.0 838.9L264.0 838.9L264.0 837.2L265.0 837.2L265.0 836.8L266.0 836.8L266.0 837.0L267.0 837.0L267.0 840.0L268.0 840.0L268.0 837.0L269.0 837.0L269.0 839.4L270.0 839.4L270.0 838.7L271.0 838.7L271.0 838.1L272.0 838.1L272.0 839.5L273.0 839.5L273.0 837.0L274.0 837.0L274.0 837.1L275.0 837.1L275.0 836.8L276.0 836.8L276.0 838.6L277.0 838.6L277.0 836.9L278.0 836.9L278.0 838.1L279.0 838.1L279.0 838.8L280.0 838.8L280.0 840.0L281.0 840.0L281.0 838.2L282.0 838.2L282.0 833.0L283.0 833.0L283.0 840.3L284.0 840.3L284.0 839.8L285.0 839.8L285.0 836.5L286.0 836.5L286.0 840.2L287.0 840.2L287.0 838.1L288.0 838.1L288.0 839.5L289.0 839.5L289.0 837.1L290.0 837.1L290.0 839.6L291.0 839.6L291.0 839.3L292.0 839.3L292.0 838.1L293.0 838.1L293.0 840.1L294.0 840.1L294.0 836.7L295.0 836.7L295.0 837.7L296.0 837.7L296.0 840.2L297.0 840.2L297.0 840.1L298.0 840.1L298.0 835.1L299.0 835.1L299.0 836.1L300.0 836.1L300.0 837.2L301.0 837.2L301.0 838.9L302.0 838.9L302.0 837.4L303.0 837.4L303.0 833.0L304.0 833.0L304.0 834.2L305.0 834.2L305.0 834.2L306.0 834.2L306.0 837.7L307.0 837.7L307.0 840.9L308.0 840.9L308.0 839.9L309.0 839.9L309.0 839.4L310.0 839.4L310.0 837.9L311.0 837.9L311.0 839.8L312.0 839.8L312.0 841.2L313.0 841.2L313.0 839.6L314.0 839.6L314.0 840.9L315.0 840.9L315.0 841.6L316.0 841.6L316.0 840.8L317.0 840.8L317.0 840.8L318.0 840.8L318.0 840.9L319.0 840.9L319.0 842.0L320.0 842.0L320.0 835.7L321.0 835.7L321.0 836.7L322.0 836.7L322.0 837.3L323.0 837.3L323.0 838.1L324.0 838.1L324.0 839.9L325.0 839.9L325.0 841.5L326.0 841.5L326.0 842.3L327.0 842.3L327.0 841.1L328.0 841.1L328.0 842.1L329.0 842.1L329.0 842.1L330.0 842.1L330.0 842.7L331.0 842.7L331.0 842.3L332.0 842.3L332.0 842.8L333.0 842.8L333.0 841.3L334.0 841.3L334.0 842.1L335.0 842.1L335.0 838.4L336.0 838.4L336.0 839.2L337.0 839.2L337.0 839.2L338.0 839.2L338.0 842.1L339.0 842.1L339.0 843.2L340.0 843.2L340.0 843.9L341.0 843.9L341.0 843.1L342.0 843.1L342.0 841.5L343.0 841.5L343.0 842.0L344.0 842.0L344.0 843.6L345.0 843.6L345.0 843.2L346.0 843.2L346.0 843.2L347.0 843.2L347.0 843.8L348.0 843.8L348.0 844.3L349.0 844.3L349.0 843.7L350.0 843.7L350.0 843.2L351.0 843.2L351.0 843.0L352.0 843.0L352.0 843.3L353.0 843.3L353.0 839.0L354.0 839.0L354.0 839.7L355.0 839.7L355.0 843.4L356.0 843.4L356.0 843.8L357.0 843.8L357.0 844.4L358.0 844.4L358.0 839.3L359.0 839.3L359.0 840.0L360.0 840.0L360.0 840.0L361.0 840.0L361.0 838.1L362.0 838.1L362.0 843.6L363.0 843.6L363.0 840.3L364.0 840.3L364.0 841.0L365.0 841.0L365.0 844.6L366.0 844.6L366.0 844.3L367.0 844.3L367.0 844.9L368.0 844.9L368.0 844.3L369.0 844.3L369.0 844.8L370.0 844.8L370.0 844.2L371.0 844.2L371.0 843.6L372.0 843.6L372.0 844.2L373.0 844.2L373.0 844.5L374.0 844.5L374.0 844.1L375.0 844.1L375.0 843.7L376.0 843.7L376.0 844.8L377.0 844.8L377.0 844.0L378.0 844.0L378.0 838.2L379.0 838.2L379.0 839.0L380.0 839.0L380.0 844.3L381.0 844.3L381.0 844.8L382.0 844.8L382.0 844.0L383.0 844.0L383.0 844.4L384.0 844.4L384.0 844.2L385.0 844.2L385.0 843.7L386.0 843.7L386.0 843.3L387.0 843.3L387.0 843.8L388.0 843.8L388.0 842.9L389.0 842.9L389.0 843.2L390.0 843.2L390.0 843.3L391.0 843.3L391.0 842.6L392.0 842.6L392.0 842.5L393.0 842.5L393.0 843.2L394.0 843.2L394.0 843.2L395.0 843.2L395.0 842.7L396.0 842.7L396.0 843.7L397.0 843.7L397.0 843.1L398.0 843.1L398.0 841.5L399.0 841.5L399.0 842.0L400.0 842.0L400.0 842.9L401.0 842.9L401.0 843.1L402.0 843.1L402.0 842.7L403.0 842.7L403.0 842.4L404.0 842.4L404.0 841.0L405.0 841.0L405.0 833.2L406.0 833.2L406.0 836.9L407.0 836.9L407.0 837.8L408.0 837.8L408.0 840.6L409.0 840.6L409.0 840.9L410.0 840.9L410.0 842.4L411.0 842.4L411.0 841.1L412.0 841.1L412.0 835.6L413.0 835.6L413.0 839.5L414.0 839.5L414.0 839.8L415.0 839.8L415.0 840.1L416.0 840.1L416.0 841.9L417.0 841.9L417.0 840.8L418.0 840.8L418.0 841.2L419.0 841.2L419.0 841.1L420.0 841.1L420.0 841.2L421.0 841.2L421.0 835.2L422.0 835.2L422.0 836.2L423.0 836.2L423.0 838.5L424.0 838.5L424.0 838.8L425.0 838.8L425.0 841.1L426.0 841.1L426.0 840.4L427.0 840.4L427.0 834.0L428.0 834.0L428.0 831.2L429.0 831.2L429.0 841.3L430.0 841.3L430.0 839.3L431.0 839.3L431.0 840.4L432.0 840.4L432.0 840.6L433.0 840.6L433.0 839.9L434.0 839.9L434.0 839.4L435.0 839.4L435.0 841.0L436.0 841.0L436.0 838.3L437.0 838.3L437.0 839.6L438.0 839.6L438.0 839.4L439.0 839.4L439.0 839.2L440.0 839.2L440.0 832.1L441.0 832.1L441.0 833.3L442.0 833.3L442.0 838.4L443.0 838.4L443.0 838.7L444.0 838.7L444.0 835.5L445.0 835.5L445.0 836.5L446.0 836.5L446.0 839.2L447.0 839.2L447.0 838.4L448.0 838.4L448.0 840.0L449.0 840.0L449.0 839.2L450.0 839.2L450.0 839.5L451.0 839.5L451.0 840.3L452.0 840.3L452.0 839.0L453.0 839.0L453.0 837.5L454.0 837.5L454.0 840.6L455.0 840.6L455.0 839.9L456.0 839.9L456.0 832.2L457.0 832.2L457.0 833.5L458.0 833.5L458.0 833.5L459.0 833.5L459.0 832.0L460.0 832.0L460.0 840.2L461.0 840.2L461.0 839.6L462.0 839.6L462.0 838.3L463.0 838.3L463.0 840.6L464.0 840.6L464.0 837.2L465.0 837.2L465.0 838.7L466.0 838.7L466.0 839.2L467.0 839.2L467.0 840.2L468.0 840.2L468.0 839.3L469.0 839.3L469.0 837.0L470.0 837.0L470.0 837.4L471.0 837.4L471.0 835.1L472.0 835.1L472.0 838.5L473.0 838.5L473.0 834.8L474.0 834.8L474.0 835.8L475.0 835.8L475.0 836.8L476.0 836.8L476.0 833.3L477.0 833.3L477.0 840.0L478.0 840.0L478.0 837.2L479.0 837.2L479.0 839.1L480.0 839.1L480.0 837.3L481.0 837.3L481.0 835.8L482.0 835.8L482.0 831.5L483.0 831.5L483.0 827.5L484.0 827.5L484.0 810.9L485.0 810.9L485.0 813.8L486.0 813.8L486.0 831.9L487.0 831.9L487.0 828.5L488.0 828.5L488.0 824.0L489.0 824.0L489.0 831.3L490.0 831.3L490.0 828.4L491.0 828.4L491.0 828.9L492.0 828.9L492.0 817.3L493.0 817.3L493.0 825.2L494.0 825.2L494.0 829.0L495.0 829.0L495.0 826.2L496.0 826.2L496.0 828.7L497.0 828.7L497.0 811.2L498.0 811.2L498.0 828.6L499.0 828.6L499.0 825.1L500.0 825.1L500.0 824.9L501.0 824.9L501.0 831.6L502.0 831.6L502.0 828.9L503.0 828.9L503.0 824.4L504.0 824.4L504.0 826.3L505.0 826.3L505.0 812.4L506.0 812.4L506.0 815.2L507.0 815.2L507.0 811.4L508.0 811.4L508.0 814.4L509.0 814.4L509.0 825.4L510.0 825.4L510.0 828.3L511.0 828.3L511.0 828.2L512.0 828.2L512.0 830.7L513.0 830.7L513.0 815.0L514.0 815.0L514.0 817.6L515.0 817.6L515.0 810.1L516.0 810.1L516.0 813.2L517.0 813.2L517.0 826.1L518.0 826.1L518.0 826.9L519.0 826.9L519.0 824.0L520.0 824.0L520.0 828.2L521.0 828.2L521.0 830.0L522.0 830.0L522.0 831.1L523.0 831.1L523.0 812.4L524.0 812.4L524.0 815.3L525.0 815.3L525.0 829.2L526.0 829.2L526.0 824.2L527.0 824.2L527.0 811.4L528.0 811.4L528.0 814.3L529.0 814.3L529.0 825.0L530.0 825.0L530.0 829.1L531.0 829.1L531.0 830.4L532.0 830.4L532.0 823.9L533.0 823.9L533.0 811.2L534.0 811.2L534.0 814.1L535.0 814.1L535.0 825.2L536.0 825.2L536.0 831.0L537.0 831.0L537.0 830.5L538.0 830.5L538.0 826.5L539.0 826.5L539.0 827.4L540.0 827.4L540.0 810.9L541.0 810.9L541.0 813.9L542.0 813.9L542.0 830.6L543.0 830.6L543.0 825.0L544.0 825.0L544.0 827.5L545.0 827.5L545.0 827.6L546.0 827.6L546.0 824.5L547.0 824.5L547.0 809.1L548.0 809.1L548.0 812.2L549.0 812.2L549.0 827.5L550.0 827.5L550.0 826.4L551.0 826.4L551.0 830.2L552.0 830.2L552.0 829.7L553.0 829.7L553.0 813.3L554.0 813.3L554.0 809.0L555.0 809.0L555.0 830.3L556.0 830.3L556.0 829.1L557.0 829.1L557.0 824.3L558.0 824.3L558.0 830.8L559.0 830.8L559.0 830.7L560.0 830.7L560.0 824.1L561.0 824.1L561.0 824.5L562.0 824.5L562.0 828.4L563.0 828.4L563.0 831.2L564.0 831.2L564.0 827.0L565.0 827.0L565.0 817.7L566.0 817.7L566.0 820.2L567.0 820.2L567.0 828.0L568.0 828.0L568.0 824.1L569.0 824.1L569.0 830.8L570.0 830.8L570.0 829.2L571.0 829.2L571.0 824.3L572.0 824.3L572.0 824.3L573.0 824.3L573.0 825.0L574.0 825.0L574.0 831.7L575.0 831.7L575.0 827.1L576.0 827.1L576.0 827.0L577.0 827.0L577.0 813.1L578.0 813.1L578.0 831.0L579.0 831.0L579.0 829.5L580.0 829.5L580.0 828.6L581.0 828.6L581.0 830.4L582.0 830.4L582.0 825.1L583.0 825.1L583.0 814.7L584.0 814.7L584.0 817.3L585.0 817.3L585.0 825.2L586.0 825.2L586.0 829.2L587.0 829.2L587.0 831.8L588.0 831.8L588.0 829.8L589.0 829.8L589.0 827.7L590.0 827.7L590.0 826.5L591.0 826.5L591.0 830.0L592.0 830.0L592.0 830.5L593.0 830.5L593.0 829.9L594.0 829.9L594.0 825.6L595.0 825.6L595.0 830.0L596.0 830.0L595.0 848Z" fill="#8fe2d5" clip-path="url(#ct1)"/>
<path d="M1111.0 848L1111.0 833.0L1112.0 833.0L1112.0 833.0L1113.0 833.0L1113.0 816.1L1114.0 816.1L1114.0 818.6L1115.0 818.6L1115.0 816.7L1116.0 816.7L1116.0 834.2L1117.0 834.2L1117.0 814.8L1118.0 814.8L1118.0 817.4L1119.0 817.4L1119.0 832.3L1120.0 832.3L1120.0 828.1L1121.0 828.1L1121.0 833.8L1122.0 833.8L1122.0 829.5L1123.0 829.5L1123.0 829.4L1124.0 829.4L1124.0 832.8L1125.0 832.8L1125.0 829.7L1126.0 829.7L1126.0 813.8L1127.0 813.8L1127.0 816.5L1128.0 816.5L1128.0 816.5L1129.0 816.5L1129.0 817.7L1130.0 817.7L1130.0 820.1L1131.0 820.1L1131.0 820.1L1132.0 820.1L1132.0 832.4L1133.0 832.4L1133.0 833.7L1134.0 833.7L1134.0 818.0L1135.0 818.0L1135.0 820.4L1136.0 820.4L1136.0 829.8L1137.0 829.8L1137.0 831.6L1138.0 831.6L1138.0 808.8L1139.0 808.8L1139.0 828.0L1140.0 828.0L1140.0 815.8L1141.0 815.8L1141.0 832.8L1142.0 832.8L1142.0 829.2L1143.0 829.2L1143.0 818.4L1144.0 818.4L1144.0 820.8L1145.0 820.8L1145.0 828.4L1146.0 828.4L1146.0 828.3L1147.0 828.3L1147.0 833.4L1148.0 833.4L1148.0 814.0L1149.0 814.0L1149.0 816.7L1150.0 816.7L1150.0 816.7L1151.0 816.7L1151.0 817.8L1152.0 817.8L1152.0 820.2L1153.0 820.2L1153.0 820.2L1154.0 820.2L1154.0 829.5L1155.0 829.5L1155.0 817.5L1156.0 817.5L1156.0 820.0L1157.0 820.0L1157.0 834.4L1158.0 834.4L1158.0 828.1L1159.0 828.1L1159.0 815.6L1160.0 815.6L1160.0 818.2L1161.0 818.2L1161.0 812.4L1162.0 812.4L1162.0 815.3L1163.0 815.3L1163.0 832.9L1164.0 832.9L1164.0 812.9L1165.0 812.9L1165.0 815.7L1166.0 815.7L1166.0 815.7L1167.0 815.7L1167.0 832.8L1168.0 832.8L1168.0 831.2L1169.0 831.2L1169.0 830.4L1170.0 830.4L1170.0 830.1L1171.0 830.1L1171.0 830.8L1172.0 830.8L1172.0 829.4L1173.0 829.4L1173.0 832.4L1174.0 832.4L1174.0 831.8L1175.0 831.8L1175.0 832.2L1176.0 832.2L1176.0 814.0L1177.0 814.0L1177.0 831.2L1178.0 831.2L1178.0 831.1L1179.0 831.1L1179.0 834.5L1180.0 834.5L1180.0 832.7L1181.0 832.7L1181.0 830.2L1182.0 830.2L1182.0 833.9L1183.0 833.9L1183.0 831.3L1184.0 831.3L1184.0 814.5L1185.0 814.5L1185.0 812.9L1186.0 812.9L1186.0 815.7L1187.0 815.7L1187.0 815.7L1188.0 815.7L1188.0 828.4L1189.0 828.4L1189.0 831.6L1190.0 831.6L1190.0 828.1L1191.0 828.1L1191.0 809.9L1192.0 809.9L1192.0 813.0L1193.0 813.0L1193.0 830.1L1194.0 830.1L1194.0 811.9L1195.0 811.9L1195.0 814.8L1196.0 814.8L1196.0 829.1L1197.0 829.1L1197.0 829.0L1198.0 829.0L1198.0 833.3L1199.0 833.3L1199.0 809.0L1200.0 809.0L1200.0 828.0L1201.0 828.0L1201.0 831.3L1202.0 831.3L1202.0 829.9L1203.0 829.9L1203.0 828.1L1204.0 828.1L1204.0 816.5L1205.0 816.5L1205.0 819.1L1206.0 819.1L1206.0 811.6L1207.0 811.6L1207.0 814.5L1208.0 814.5L1208.0 811.2L1209.0 811.2L1209.0 831.5L1210.0 831.5L1210.0 831.8L1211.0 831.8L1211.0 813.9L1212.0 813.9L1212.0 816.6L1213.0 816.6L1213.0 816.6L1214.0 816.6L1214.0 834.2L1215.0 834.2L1215.0 831.0L1216.0 831.0L1216.0 832.8L1217.0 832.8L1217.0 814.6L1218.0 814.6L1218.0 817.3L1219.0 817.3L1219.0 817.3L1220.0 817.3L1220.0 830.0L1221.0 830.0L1221.0 828.0L1222.0 828.0L1222.0 828.1L1223.0 828.1L1223.0 832.4L1224.0 832.4L1224.0 830.2L1225.0 830.2L1225.0 829.1L1226.0 829.1L1226.0 832.5L1227.0 832.5L1227.0 809.7L1228.0 809.7L1228.0 831.2L1229.0 831.2L1229.0 812.9L1230.0 812.9L1230.0 815.7L1231.0 815.7L1231.0 831.7L1232.0 831.7L1232.0 809.7L1233.0 809.7L1233.0 812.8L1234.0 812.8L1234.0 812.8L1235.0 812.8L1235.0 829.0L1236.0 829.0L1236.0 833.8L1237.0 833.8L1237.0 831.1L1238.0 831.1L1238.0 830.1L1239.0 830.1L1239.0 828.0L1240.0 828.0L1240.0 827.9L1241.0 827.9L1241.0 818.5L1242.0 818.5L1242.0 820.9L1243.0 820.9L1243.0 813.2L1244.0 813.2L1244.0 816.0L1245.0 816.0L1245.0 830.3L1246.0 830.3L1246.0 832.5L1247.0 832.5L1247.0 818.8L1248.0 818.8L1248.0 816.6L1249.0 816.6L1249.0 814.2L1250.0 814.2L1250.0 816.9L1251.0 816.9L1251.0 816.9L1252.0 816.9L1252.0 830.9L1253.0 830.9L1253.0 832.6L1254.0 832.6L1254.0 832.7L1255.0 832.7L1255.0 813.1L1256.0 813.1L1256.0 815.9L1257.0 815.9L1257.0 818.7L1258.0 818.7L1258.0 821.0L1259.0 821.0L1259.0 821.0L1260.0 821.0L1260.0 811.0L1261.0 811.0L1261.0 814.0L1262.0 814.0L1262.0 829.9L1263.0 829.9L1263.0 834.1L1264.0 834.1L1264.0 829.3L1265.0 829.3L1265.0 829.2L1266.0 829.2L1266.0 818.4L1267.0 818.4L1267.0 820.8L1268.0 820.8L1268.0 831.8L1269.0 831.8L1269.0 831.2L1270.0 831.2L1270.0 830.0L1271.0 830.0L1271.0 832.2L1272.0 832.2L1272.0 831.1L1273.0 831.1L1273.0 828.2L1274.0 828.2L1274.0 831.7L1275.0 831.7L1275.0 827.5L1276.0 827.5L1276.0 831.5L1277.0 831.5L1277.0 811.2L1278.0 811.2L1278.0 814.2L1279.0 814.2L1279.0 814.2L1280.0 814.2L1280.0 832.7L1281.0 832.7L1281.0 830.5L1282.0 830.5L1282.0 831.9L1283.0 831.9L1283.0 834.1L1284.0 834.1L1284.0 812.5L1285.0 812.5L1285.0 815.3L1286.0 815.3L1286.0 832.2L1287.0 832.2L1287.0 829.1L1288.0 829.1L1288.0 817.0L1289.0 817.0L1289.0 819.5L1290.0 819.5L1290.0 819.5L1291.0 819.5L1291.0 829.3L1292.0 829.3L1292.0 831.7L1293.0 831.7L1293.0 832.4L1294.0 832.4L1294.0 819.2L1295.0 819.2L1295.0 821.5L1296.0 821.5L1296.0 810.9L1297.0 810.9L1297.0 813.8L1298.0 813.8L1298.0 812.4L1299.0 812.4L1299.0 815.2L1300.0 815.2L1300.0 815.2L1301.0 815.2L1301.0 828.6L1302.0 828.6L1302.0 833.2L1303.0 833.2L1303.0 831.0L1304.0 831.0L1304.0 827.3L1305.0 827.3L1305.0 827.6L1306.0 827.6L1306.0 816.1L1307.0 816.1L1307.0 818.6L1308.0 818.6L1308.0 828.4L1309.0 828.4L1309.0 832.3L1310.0 832.3L1310.0 815.2L1311.0 815.2L1311.0 817.9L1312.0 817.9L1312.0 817.9L1313.0 817.9L1313.0 828.1L1314.0 828.1L1314.0 818.2L1315.0 818.2L1315.0 817.3L1316.0 817.3L1316.0 830.8L1317.0 830.8L1317.0 833.9L1318.0 833.9L1318.0 811.5L1319.0 811.5L1319.0 814.4L1320.0 814.4L1320.0 814.1L1321.0 814.1L1321.0 816.8L1322.0 816.8L1322.0 827.8L1323.0 827.8L1323.0 832.2L1324.0 832.2L1324.0 831.6L1325.0 831.6L1325.0 829.9L1326.0 829.9L1326.0 829.6L1327.0 829.6L1327.0 828.6L1328.0 828.6L1328.0 812.7L1329.0 812.7L1329.0 815.6L1330.0 815.6L1330.0 829.9L1331.0 829.9L1331.0 828.8L1332.0 828.8L1332.0 828.2L1333.0 828.2L1333.0 833.7L1334.0 833.7L1334.0 829.4L1335.0 829.4L1335.0 828.9L1336.0 828.9L1336.0 829.4L1337.0 829.4L1337.0 833.9L1338.0 833.9L1338.0 830.0L1339.0 830.0L1339.0 830.7L1340.0 830.7L1340.0 831.4L1341.0 831.4L1341.0 831.2L1342.0 831.2L1342.0 829.8L1343.0 829.8L1343.0 811.8L1344.0 811.8L1344.0 813.1L1345.0 813.1L1345.0 815.9L1346.0 815.9L1346.0 834.0L1347.0 834.0L1347.0 815.3L1348.0 815.3L1348.0 818.0L1349.0 818.0L1349.0 818.0L1350.0 818.0L1350.0 833.3L1351.0 833.3L1351.0 830.8L1352.0 830.8L1352.0 831.9L1353.0 831.9L1353.0 828.8L1354.0 828.8L1354.0 829.4L1355.0 829.4L1355.0 830.5L1356.0 830.5L1356.0 831.3L1357.0 831.3L1357.0 830.8L1358.0 830.8L1358.0 830.3L1359.0 830.3L1359.0 819.2L1360.0 819.2L1360.0 821.5L1361.0 821.5L1361.0 814.3L1362.0 814.3L1362.0 817.0L1363.0 817.0L1363.0 827.6L1364.0 827.6L1364.0 830.8L1365.0 830.8L1365.0 813.8L1366.0 813.8L1366.0 816.5L1367.0 816.5L1367.0 827.1L1368.0 827.1L1368.0 816.7L1369.0 816.7L1369.0 819.2L1370.0 819.2L1370.0 830.4L1371.0 830.4L1371.0 828.0L1372.0 828.0L1372.0 808.3L1373.0 808.3L1373.0 828.0L1374.0 828.0L1374.0 829.0L1375.0 829.0L1375.0 830.9L1376.0 830.9L1376.0 827.8L1377.0 827.8L1377.0 811.7L1378.0 811.7L1378.0 830.8L1379.0 830.8L1379.0 814.7L1380.0 814.7L1380.0 817.4L1381.0 817.4L1381.0 827.6L1382.0 827.6L1382.0 834.0L1383.0 834.0L1383.0 827.6L1384.0 827.6L1384.0 832.4L1385.0 832.4L1385.0 832.9L1386.0 832.9L1386.0 830.5L1387.0 830.5L1387.0 811.1L1388.0 811.1L1388.0 814.1L1389.0 814.1L1389.0 811.2L1390.0 811.2L1390.0 814.1L1391.0 814.1L1391.0 829.7L1392.0 829.7L1392.0 828.0L1393.0 828.0L1393.0 827.3L1394.0 827.3L1394.0 827.9L1395.0 827.9L1395.0 820.2L1396.0 820.2L1396.0 828.2L1397.0 828.2L1397.0 828.1L1398.0 828.1L1398.0 831.5L1399.0 831.5L1399.0 831.3L1400.0 831.3L1400.0 833.9L1401.0 833.9L1401.0 819.6L1402.0 819.6L1402.0 821.8L1403.0 821.8L1403.0 811.3L1404.0 811.3L1404.0 827.4L1405.0 827.4L1405.0 829.9L1406.0 829.9L1406.0 829.3L1407.0 829.3L1407.0 833.8L1408.0 833.8L1408.0 831.6L1409.0 831.6L1409.0 810.0L1410.0 810.0L1410.0 813.0L1411.0 813.0L1411.0 831.6L1412.0 831.6L1412.0 829.8L1413.0 829.8L1413.0 813.7L1414.0 813.7L1414.0 816.4L1415.0 816.4L1415.0 815.0L1416.0 815.0L1416.0 833.4L1417.0 833.4L1417.0 832.7L1418.0 832.7L1418.0 817.1L1419.0 817.1L1419.0 818.0L1420.0 818.0L1420.0 814.1L1421.0 814.1L1421.0 816.8L1422.0 816.8L1422.0 834.0L1423.0 834.0L1423.0 830.2L1424.0 830.2L1424.0 818.1L1425.0 818.1L1425.0 820.5L1426.0 820.5L1426.0 815.7L1427.0 815.7L1427.0 833.2L1428.0 833.2L1428.0 815.2L1429.0 815.2L1429.0 831.7L1430.0 831.7L1430.0 834.1L1431.0 834.1L1431.0 833.0L1432.0 833.0L1432.0 834.3L1433.0 834.3L1433.0 830.4L1434.0 830.4L1434.0 830.7L1435.0 830.7L1435.0 833.5L1436.0 833.5L1436.0 829.6L1437.0 829.6L1437.0 829.6L1438.0 829.6L1438.0 818.5L1439.0 818.5L1439.0 829.6L1440.0 829.6L1440.0 833.1L1441.0 833.1L1441.0 828.6L1442.0 828.6L1442.0 833.7L1443.0 833.7L1443.0 829.4L1444.0 829.4L1444.0 832.0L1445.0 832.0L1445.0 827.9L1446.0 827.9L1446.0 830.5L1447.0 830.5L1447.0 827.7L1448.0 827.7L1448.0 830.0L1449.0 830.0L1449.0 833.5L1450.0 833.5L1450.0 813.9L1451.0 813.9L1451.0 831.5L1452.0 831.5L1452.0 833.1L1453.0 833.1L1453.0 815.2L1454.0 815.2L1454.0 832.7L1455.0 832.7L1455.0 813.4L1456.0 813.4L1456.0 816.1L1457.0 816.1L1457.0 830.4L1458.0 830.4L1458.0 833.7L1459.0 833.7L1459.0 830.3L1460.0 830.3L1460.0 831.4L1461.0 831.4L1461.0 834.3L1462.0 834.3L1462.0 828.3L1463.0 828.3L1463.0 833.3L1464.0 833.3L1464.0 831.4L1465.0 831.4L1465.0 832.8L1466.0 832.8L1466.0 832.9L1467.0 832.9L1467.0 829.3L1468.0 829.3L1468.0 830.4L1469.0 830.4L1469.0 830.2L1470.0 830.2L1470.0 833.7L1471.0 833.7L1471.0 830.0L1472.0 830.0L1472.0 828.9L1473.0 828.9L1473.0 833.3L1474.0 833.3L1474.0 832.2L1475.0 832.2L1475.0 832.1L1476.0 832.1L1476.0 833.7L1477.0 833.7L1477.0 818.3L1478.0 818.3L1478.0 820.6L1479.0 820.6L1479.0 834.3L1480.0 834.3L1480.0 817.1L1481.0 817.1L1481.0 833.6L1482.0 833.6L1482.0 834.0L1483.0 834.0L1483.0 828.9L1484.0 828.9L1484.0 832.2L1485.0 832.2L1485.0 832.2L1486.0 832.2L1486.0 822.6L1487.0 822.6L1487.0 824.6L1488.0 824.6L1488.0 829.5L1489.0 829.5L1489.0 818.5L1490.0 818.5L1490.0 820.9L1491.0 820.9L1491.0 821.5L1492.0 821.5L1492.0 823.6L1493.0 823.6L1493.0 817.2L1494.0 817.2L1494.0 819.6L1495.0 819.6L1495.0 833.4L1496.0 833.4L1496.0 835.7L1497.0 835.7L1497.0 834.1L1498.0 834.1L1498.0 834.7L1499.0 834.7L1499.0 825.8L1500.0 825.8L1500.0 834.5L1501.0 834.5L1501.0 837.0L1502.0 837.0L1502.0 830.9L1503.0 830.9L1503.0 832.2L1504.0 832.2L1504.0 837.6L1505.0 837.6L1505.0 831.3L1506.0 831.3L1506.0 832.6L1507.0 832.6L1507.0 838.9L1508.0 838.9L1508.0 828.7L1509.0 828.7L1509.0 830.3L1510.0 830.3L1510.0 839.0L1511.0 839.0L1511.0 829.2L1512.0 829.2L1512.0 830.7L1513.0 830.7L1513.0 830.7L1514.0 830.7L1514.0 839.9L1515.0 839.9L1515.0 838.3L1516.0 838.3L1516.0 833.9L1517.0 833.9L1517.0 835.0L1518.0 835.0L1518.0 839.3L1519.0 839.3L1519.0 839.7L1520.0 839.7L1520.0 840.3L1521.0 840.3L1521.0 837.2L1522.0 837.2L1522.0 839.6L1523.0 839.6L1523.0 837.6L1524.0 837.6L1524.0 840.8L1525.0 840.8L1525.0 840.5L1526.0 840.5L1526.0 837.8L1527.0 837.8L1527.0 840.3L1528.0 840.3L1528.0 832.6L1529.0 832.6L1529.0 833.8L1530.0 833.8L1530.0 840.0L1531.0 840.0L1531.0 839.1L1532.0 839.1L1532.0 836.0L1533.0 836.0L1533.0 837.0L1534.0 837.0L1534.0 837.0L1535.0 837.0L1535.0 840.7L1536.0 840.7L1536.0 841.4L1537.0 841.4L1537.0 834.7L1538.0 834.7L1538.0 835.7L1539.0 835.7L1539.0 835.7L1540.0 835.7L1540.0 841.2L1541.0 841.2L1541.0 841.3L1542.0 841.3L1542.0 841.4L1543.0 841.4L1543.0 840.2L1544.0 840.2L1544.0 840.8L1545.0 840.8L1545.0 841.7L1546.0 841.7L1546.0 842.1L1547.0 842.1L1547.0 842.6L1548.0 842.6L1548.0 840.6L1549.0 840.6L1549.0 839.1L1550.0 839.1L1550.0 841.8L1551.0 841.8L1551.0 839.7L1552.0 839.7L1552.0 840.4L1553.0 840.4L1553.0 840.4L1554.0 840.4L1554.0 841.4L1555.0 841.4L1555.0 842.9L1556.0 842.9L1556.0 843.2L1557.0 843.2L1557.0 842.1L1558.0 842.1L1558.0 843.8L1559.0 843.8L1559.0 843.8L1560.0 843.8L1560.0 840.0L1561.0 840.0L1561.0 840.7L1562.0 840.7L1562.0 840.7L1563.0 840.7L1563.0 843.6L1564.0 843.6L1564.0 842.7L1565.0 842.7L1565.0 842.9L1566.0 842.9L1566.0 840.3L1567.0 840.3L1567.0 844.4L1568.0 844.4L1568.0 841.2L1569.0 841.2L1569.0 841.7L1570.0 841.7L1570.0 844.1L1571.0 844.1L1571.0 843.7L1572.0 843.7L1572.0 844.3L1573.0 844.3L1573.0 844.2L1574.0 844.2L1574.0 845.2L1575.0 845.2L1575.0 845.0L1576.0 845.0L1576.0 844.7L1577.0 844.7L1577.0 845.0L1578.0 845.0L1578.0 843.8L1579.0 843.8L1579.0 844.9L1580.0 844.9L1580.0 844.1L1581.0 844.1L1581.0 844.5L1582.0 844.5L1582.0 845.9L1583.0 845.9L1583.0 846.0L1584.0 846.0L1584.0 844.3L1585.0 844.3L1585.0 844.7L1586.0 844.7L1586.0 845.0L1587.0 845.0L1587.0 845.0L1588.0 845.0L1588.0 845.2L1589.0 845.2L1589.0 846.5L1590.0 846.5L1590.0 846.6L1591.0 846.6L1591.0 846.7L1592.0 846.7L1592.0 845.7L1593.0 845.7L1593.0 845.9L1594.0 845.9L1594.0 847.1L1595.0 847.1L1594.0 848Z" fill="#8fe2d5" clip-path="url(#ct2)"/>
</svg>
<div class="t" style="left:90px;top:817.5px;font-size:17px;color:#f4fbfa">Atmosphere_Chill_Beat.mp3</div>
<div class="t" style="left:1123px;top:817.5px;font-size:17px;color:rgba(240,250,248,0.55)">Atmosphere_Chill_Beat.mp3</div>

<!-- clip1 -->
<div class="a" style="left:78px;top:672px;width:98px;height:62px;border:2.2px solid #5560c4;border-radius:10px;overflow:hidden;background:linear-gradient(90deg,#26a4ec,#3ab4f2 40%,#44bcf8 62%,#2aa8f0 100%)">
<div class="a" style="left:25px;top:26px;width:24px;height:34px;background:#e2ae2a;border-radius:8px 8px 3px 3px"></div>
<div class="a" style="left:29px;top:8px;width:21px;height:20px;background:#1c1718;border-radius:50%"></div>
<div class="a" style="left:34px;top:15px;width:10px;height:12px;background:#a06a4c;border-radius:40%"></div>
</div>
<!-- clip2 video -->
<div class="a" style="left:178px;top:672px;width:316px;height:62px;border:2.2px solid #5560c4;border-radius:10px 10px 0 0;overflow:hidden;background:#b59c63">
<div class="a" style="left:0;top:0;width:100px;height:58px;background:linear-gradient(180deg,#6ea4d2 0%,#a8c4dc 25%,#dcdcdc 45%,#d0ccc4 52%,#b9a36f 56%,#b09660 100%)"></div>
<div class="a" style="left:40px;top:0;width:60px;height:30px;background:radial-gradient(ellipse at 50% 60%,rgba(230,230,230,0.9),rgba(230,230,230,0) 70%)"></div>
<div class="a" style="left:100px;top:0;width:100px;height:58px;background:linear-gradient(180deg,#cfcdca 0%,#c6c4c0 28%,#8e8c88 38%,#b8a06a 46%,#ab925c 100%)"></div>
<div class="a" style="left:200px;top:0;width:116px;height:58px;background:linear-gradient(180deg,#cfcdca 0%,#c6c4c0 22%,#8e8c88 32%,#b8a06a 40%,#ab925c 100%)"></div>
<div class="a" style="left:34px;top:13px;width:20px;height:36px;background:#a8743c;border-radius:45% 45% 20% 20%"></div>
<div class="a" style="left:25px;top:34px;width:38px;height:26px;background:#5a1a20;border-radius:9px 9px 0 0"></div>
<div class="a" style="left:38px;top:17px;width:12px;height:18px;background:#c89070;border-radius:45%"></div>
<div class="a" style="left:36px;top:34px;width:6px;height:18px;background:#b07a40;border-radius:3px"></div>
<div class="a" style="left:47px;top:34px;width:6px;height:20px;background:#b07a40;border-radius:3px"></div>
<div class="a" style="left:133px;top:13px;width:20px;height:36px;background:#a8743c;border-radius:45% 45% 20% 20%"></div>
<div class="a" style="left:124px;top:34px;width:38px;height:26px;background:#5a1a20;border-radius:9px 9px 0 0"></div>
<div class="a" style="left:137px;top:17px;width:12px;height:18px;background:#c89070;border-radius:45%"></div>
<div class="a" style="left:135px;top:34px;width:6px;height:18px;background:#b07a40;border-radius:3px"></div>
<div class="a" style="left:146px;top:34px;width:6px;height:20px;background:#b07a40;border-radius:3px"></div>
<div class="a" style="left:234px;top:13px;width:20px;height:36px;background:#a8743c;border-radius:45% 45% 20% 20%"></div>
<div class="a" style="left:225px;top:34px;width:38px;height:26px;background:#5a1a20;border-radius:9px 9px 0 0"></div>
<div class="a" style="left:238px;top:17px;width:12px;height:18px;background:#c89070;border-radius:45%"></div>
<div class="a" style="left:236px;top:34px;width:6px;height:18px;background:#b07a40;border-radius:3px"></div>
<div class="a" style="left:247px;top:34px;width:6px;height:20px;background:#b07a40;border-radius:3px"></div>
</div>
<!-- clip3 -->
<div class="a" style="left:497.5px;top:672px;width:97px;height:62px;border:2.2px solid #5560c4;border-radius:10px;overflow:hidden;background:#e08a14">
<div class="a" style="left:0;top:0;width:66px;height:58px;background:linear-gradient(90deg,#d07010 0%,#f4b020 14%,#e07a10 26%,#a0400c 45%,#7a3a1e 70%,#a05a20 85%,#e08a20 100%)"></div>
<div class="a" style="left:22px;top:4px;width:38px;height:36px;background:radial-gradient(ellipse at 45% 45%,#c87050 0%,#9a3a14 45%,rgba(120,40,10,0) 75%)"></div>
<div class="a" style="left:24px;top:36px;width:42px;height:22px;background:linear-gradient(180deg,#e8c030,#f8d818);border-radius:10px 10px 0 0"></div>
<div class="a" style="left:18px;top:36px;width:12px;height:12px;background:rgba(150,200,220,0.85);border-radius:50%"></div>
<div class="a" style="left:46px;top:38px;width:12px;height:11px;background:rgba(150,200,220,0.7);border-radius:50%"></div>
<div class="a" style="left:8px;top:34px;width:4px;height:24px;background:#f8e020;transform:skewX(-18deg);border-radius:2px"></div>
<div class="a" style="left:66px;top:0;width:31px;height:58px;background:linear-gradient(90deg,#5a3018 0%,#b85a14 25%,#f0a818 55%,#e07810 85%,#c06010 100%)"></div>
<div class="a" style="left:76px;top:34px;width:4px;height:24px;background:#f8e020;transform:skewX(-18deg);border-radius:2px"></div>
<div class="a" style="left:84px;top:36px;width:9px;height:10px;background:rgba(150,200,220,0.7);border-radius:50%"></div>
</div>
<!-- clip4 video -->
<div class="a" style="left:598px;top:672px;width:510px;height:61px;border:2.2px solid #5560c4;border-radius:10px 10px 0 0;overflow:hidden;background:#121218">
<div class="a" style="left:0;top:0;width:99px;height:57px;background:linear-gradient(180deg,#b8c4d0 0%,#c0c8d0 45%,#a05a48 52%,#b4523c 100%)"></div>
<div class="a" style="left:0;top:0;width:40px;height:30px;background:linear-gradient(180deg,#b8a898,#a09080)"></div>
<div class="a" style="left:78px;top:0;width:21px;height:32px;background:#6a7060"></div>
<div class="a" style="left:20px;top:14px;width:10px;height:20px;background:#3a2a2a;border-radius:4px"></div>
<div class="a" style="left:46px;top:10px;width:12px;height:24px;background:#3a2a2a;border-radius:4px"></div>
<div class="a" style="left:76px;top:14px;width:10px;height:20px;background:#3a2a2a;border-radius:4px"></div>
<div class="a" style="left:12px;top:34px;width:70px;height:14px;background:rgba(60,30,30,0.35);border-radius:40%"></div>
<div class="a" style="left:99px;top:0;width:101px;height:57px;background:linear-gradient(180deg,#b8d8e4 0%,#a8ccd8 22%,#5a9050 30%,#78a868 40%,#e8ecec 48%,#c8d0cc 60%,#b4bcb8 100%)"></div>
<div class="a" style="left:132px;top:4px;width:34px;height:12px;background:#3a3040;border-radius:50% 50% 20% 20%"></div>
<div class="a" style="left:134px;top:12px;width:30px;height:40px;background:linear-gradient(180deg,#d0a080 0%,#c08868 50%,#9a6a50 75%,#8a6048 100%);border-radius:45% 45% 40% 40%"></div>
<div class="a" style="left:200px;top:0;width:101px;height:57px;background:#131318"></div>
<div class="a" style="left:200px;top:0;width:5px;height:57px;background:#1e1e28"></div>
<div class="a" style="left:247px;top:0;width:18px;height:8px;background:#c83040"></div>
<div class="a" style="left:268px;top:0;width:22px;height:8px;background:#5a4aa8"></div>
<div class="a" style="left:246px;top:16px;width:22px;height:14px;background:#5a5a70;border-radius:2px"></div>
<div class="a" style="left:270px;top:16px;width:24px;height:14px;background:#3a3ab0;border-radius:2px"></div>
<div class="a" style="left:210px;top:53px;width:91px;height:4px;background:#6a3ab0"></div>
<div class="a" style="left:210px;top:46px;width:91px;height:2px;background:#2a2a38"></div>
<div class="a" style="left:301px;top:0;width:100px;height:57px;background:linear-gradient(135deg,#28b0d8 0%,#1a88c8 35%,#1e5ab0 55%,#2a9ad0 80%,#1a7ab8 100%)"></div>
<div class="a" style="left:325px;top:10px;width:30px;height:24px;background:rgba(20,40,100,0.55);border-radius:40%;transform:rotate(30deg)"></div>
<div class="a" style="left:305px;top:45px;width:46px;height:8px;background:linear-gradient(90deg,#c04a5a,#e87a7a,#a04a6a)"></div>
<div class="a" style="left:352px;top:45px;width:46px;height:8px;background:linear-gradient(90deg,#1a6a7a,#3aa0a8,#1a6a7a)"></div>
<div class="a" style="left:401px;top:0;width:105px;height:57px;background:#a8d8ee"></div>
<div class="a" style="left:411px;top:9px;width:90px;height:48px;background:#121218"></div>
<div class="a" style="left:501px;top:0;width:6px;height:57px;background:#f0f4f8"></div>
</div>
<div class="t" style="left:601px;top:694px;font-size:8px;font-weight:bold;color:#fff;letter-spacing:0.6px;-webkit-text-stroke:0">AI BACKGROUND</div>
<div class="t" style="left:643px;top:702px;font-size:8px;font-weight:bold;color:#fff;letter-spacing:0.6px;-webkit-text-stroke:0">REMOVAL</div>
<div class="t" style="left:702px;top:715px;font-size:8px;font-weight:bold;color:#fff;letter-spacing:0.6px;-webkit-text-stroke:0">AI NOISE</div>
<div class="t" style="left:718px;top:722.5px;font-size:8px;font-weight:bold;color:#fff;letter-spacing:0.6px;-webkit-text-stroke:0">REMOVAL</div>
<div class="t" style="left:979px;top:704px;font-size:8px;font-weight:bold;color:#fff;letter-spacing:0.5px;-webkit-text-stroke:0">LIT</div>
<div class="t" style="left:935px;top:711.5px;font-size:8px;font-weight:bold;color:#fff;letter-spacing:0.6px;-webkit-text-stroke:0">OVERLAYS</div>
<!-- clip5 -->
<div class="a" style="left:1110.7px;top:672px;width:98px;height:62px;border:2.2px solid #5560c4;border-radius:10px;overflow:hidden;background:linear-gradient(180deg,#1c6cc4 0%,#1a70cc 81%,#cdc9c0 82%,#c4c0b8 100%)">
<div class="a" style="left:2px;top:22px;width:30px;height:24px;background:rgba(150,180,200,0.35);border-radius:45%"></div>
<div class="a" style="left:18px;top:14px;width:20px;height:28px;background:rgba(170,190,205,0.4);border-radius:45%"></div>
<div class="a" style="left:52px;top:18px;width:34px;height:26px;background:rgba(160,185,205,0.35);border-radius:45%"></div>
<div class="a" style="left:84px;top:24px;width:10px;height:18px;background:rgba(160,185,205,0.35);border-radius:45%"></div>
<div class="a" style="left:0;top:37px;width:98px;height:3px;background:rgba(20,70,150,0.6)"></div>
<div class="a" style="left:33px;top:27px;width:13px;height:15px;background:#16284a;border-radius:3px;transform:skewX(-12deg)"></div>
<div class="a" style="left:27px;top:18px;width:13px;height:12px;background:#ecbc2a;border-radius:4px;transform:rotate(-15deg)"></div>
<div class="a" style="left:38px;top:20px;width:14px;height:3px;background:#e8c040;transform:rotate(10deg)"></div>
<div class="a" style="left:35px;top:14px;width:8px;height:7px;background:#2a1a18;border-radius:50%"></div>
</div>

<!-- TRACK HEADERS -->
<svg class="ic" style="left:0;top:0" width="70" height="1080" fill="none" stroke-linecap="round" stroke-linejoin="round">
<path d="M6.5 621.7H22.6M14.6 621.7V639.4" stroke="#4a4b5c" stroke-width="2.2"/>
<ellipse cx="43.5" cy="620" rx="7.6" ry="5" fill="#c8c8dc" stroke="none"/>
<circle cx="43.5" cy="620" r="3" fill="#c8c8dc" stroke="#14151a" stroke-width="1.4"/>
<path d="M39.2 635.2Q34.6 640 39.2 644.8M47.8 635.2Q52.4 640 47.8 644.8M41 640H46" stroke="#c8c8dc" stroke-width="2.6"/>
<ellipse cx="43.5" cy="707" rx="7.6" ry="5" fill="#c8c8dc" stroke="none"/>
<circle cx="43.5" cy="707" r="3" fill="#c8c8dc" stroke="#14151a" stroke-width="1.4"/>
<rect x="6" y="716" width="2.6" height="4.2" rx="0.6" fill="#4e5066" stroke="none"/>
<rect x="6" y="723.8" width="2.6" height="4.2" rx="0.6" fill="#4e5066" stroke="none"/>
<rect x="6" y="731.6" width="2.6" height="4.2" rx="0.6" fill="#4e5066" stroke="none"/>
<rect x="21.2" y="716" width="2.6" height="4.2" rx="0.6" fill="#4e5066" stroke="none"/>
<rect x="21.2" y="723.8" width="2.6" height="4.2" rx="0.6" fill="#4e5066" stroke="none"/>
<rect x="21.2" y="731.6" width="2.6" height="4.2" rx="0.6" fill="#4e5066" stroke="none"/>
<rect x="11" y="716" width="8" height="8.6" fill="#4e5066" stroke="none"/>
<rect x="11" y="727" width="8" height="9" fill="#4e5066" stroke="none"/>
<path d="M36 724.3H39.5L44.5 720.6V733.4L39.5 729.7H36Z" fill="#c8c8dc" stroke="#c8c8dc" stroke-width="1"/>
<path d="M47.4 722.6Q50.6 727 47.4 731.4" stroke="#c8c8dc" stroke-width="2.2"/>
<path d="M50.8 747H37M41.6 742.2L36.8 747L41.6 751.8" stroke="#c8c8dc" stroke-width="2.4"/>
<path d="M36 812.6H39.5L44.5 808.9V821.7L39.5 818H36Z" fill="#c8c8dc" stroke="#c8c8dc" stroke-width="1"/>
<path d="M47.4 810.9Q50.6 815.3 47.4 819.7" stroke="#c8c8dc" stroke-width="2.2"/>
<path d="M39 830Q35.4 835 39 840M48 830Q51.6 835 48 840M37 843L50.5 828" stroke="#c8c8dc" stroke-width="2"/>
<path d="M11.2 832V819.2L22.6 816.4V829.6" stroke="#4e5060" stroke-width="1.6"/>
<circle cx="9" cy="832.4" r="2.8" fill="#4e5060" stroke="none"/>
<circle cx="20.2" cy="829.8" r="2.8" fill="#4e5060" stroke="none"/>
</svg>

<!-- METER -->
<svg class="ic" style="left:0;top:0" width="1920" height="1080">
<g fill="#5c5e72"><rect x="1877" y="625.0" width="10.5" height="3.6" rx="1.8"/><rect x="1897.5" y="625.0" width="10.5" height="3.6" rx="1.8"/><rect x="1877" y="631.3" width="10.5" height="3.6" rx="1.8"/><rect x="1897.5" y="631.3" width="10.5" height="3.6" rx="1.8"/><rect x="1877" y="637.7" width="10.5" height="3.6" rx="1.8"/><rect x="1897.5" y="637.7" width="10.5" height="3.6" rx="1.8"/><rect x="1877" y="644.0" width="10.5" height="3.6" rx="1.8"/><rect x="1897.5" y="644.0" width="10.5" height="3.6" rx="1.8"/><rect x="1877" y="650.3" width="10.5" height="3.6" rx="1.8"/><rect x="1897.5" y="650.3" width="10.5" height="3.6" rx="1.8"/><rect x="1877" y="656.7" width="10.5" height="3.6" rx="1.8"/><rect x="1897.5" y="656.7" width="10.5" height="3.6" rx="1.8"/><rect x="1877" y="663.0" width="10.5" height="3.6" rx="1.8"/><rect x="1897.5" y="663.0" width="10.5" height="3.6" rx="1.8"/><rect x="1877" y="669.3" width="10.5" height="3.6" rx="1.8"/><rect x="1897.5" y="669.3" width="10.5" height="3.6" rx="1.8"/><rect x="1877" y="675.6" width="10.5" height="3.6" rx="1.8"/><rect x="1897.5" y="675.6" width="10.5" height="3.6" rx="1.8"/><rect x="1877" y="682.0" width="10.5" height="3.6" rx="1.8"/><rect x="1897.5" y="682.0" width="10.5" height="3.6" rx="1.8"/><rect x="1877" y="688.3" width="10.5" height="3.6" rx="1.8"/><rect x="1897.5" y="688.3" width="10.5" height="3.6" rx="1.8"/><rect x="1877" y="694.6" width="10.5" height="3.6" rx="1.8"/><rect x="1897.5" y="694.6" width="10.5" height="3.6" rx="1.8"/><rect x="1877" y="701.0" width="10.5" height="3.6" rx="1.8"/><rect x="1897.5" y="701.0" width="10.5" height="3.6" rx="1.8"/><rect x="1877" y="707.3" width="10.5" height="3.6" rx="1.8"/><rect x="1897.5" y="707.3" width="10.5" height="3.6" rx="1.8"/><rect x="1877" y="713.6" width="10.5" height="3.6" rx="1.8"/><rect x="1897.5" y="713.6" width="10.5" height="3.6" rx="1.8"/><rect x="1877" y="720.0" width="10.5" height="3.6" rx="1.8"/><rect x="1897.5" y="720.0" width="10.5" height="3.6" rx="1.8"/><rect x="1877" y="726.3" width="10.5" height="3.6" rx="1.8"/><rect x="1897.5" y="726.3" width="10.5" height="3.6" rx="1.8"/><rect x="1877" y="732.6" width="10.5" height="3.6" rx="1.8"/><rect x="1897.5" y="732.6" width="10.5" height="3.6" rx="1.8"/><rect x="1877" y="738.9" width="10.5" height="3.6" rx="1.8"/><rect x="1897.5" y="738.9" width="10.5" height="3.6" rx="1.8"/><rect x="1877" y="745.3" width="10.5" height="3.6" rx="1.8"/><rect x="1897.5" y="745.3" width="10.5" height="3.6" rx="1.8"/><rect x="1877" y="751.6" width="10.5" height="3.6" rx="1.8"/><rect x="1897.5" y="751.6" width="10.5" height="3.6" rx="1.8"/><rect x="1877" y="757.9" width="10.5" height="3.6" rx="1.8"/><rect x="1897.5" y="757.9" width="10.5" height="3.6" rx="1.8"/><rect x="1877" y="764.3" width="10.5" height="3.6" rx="1.8"/><rect x="1897.5" y="764.3" width="10.5" height="3.6" rx="1.8"/><rect x="1877" y="770.6" width="10.5" height="3.6" rx="1.8"/><rect x="1897.5" y="770.6" width="10.5" height="3.6" rx="1.8"/><rect x="1877" y="776.9" width="10.5" height="3.6" rx="1.8"/><rect x="1897.5" y="776.9" width="10.5" height="3.6" rx="1.8"/><rect x="1877" y="783.3" width="10.5" height="3.6" rx="1.8"/><rect x="1897.5" y="783.3" width="10.5" height="3.6" rx="1.8"/><rect x="1877" y="789.6" width="10.5" height="3.6" rx="1.8"/><rect x="1897.5" y="789.6" width="10.5" height="3.6" rx="1.8"/><rect x="1877" y="795.9" width="10.5" height="3.6" rx="1.8"/><rect x="1897.5" y="795.9" width="10.5" height="3.6" rx="1.8"/><rect x="1877" y="802.2" width="10.5" height="3.6" rx="1.8"/><rect x="1897.5" y="802.2" width="10.5" height="3.6" rx="1.8"/><rect x="1877" y="808.6" width="10.5" height="3.6" rx="1.8"/><rect x="1897.5" y="808.6" width="10.5" height="3.6" rx="1.8"/><rect x="1877" y="814.9" width="10.5" height="3.6" rx="1.8"/><rect x="1897.5" y="814.9" width="10.5" height="3.6" rx="1.8"/><rect x="1877" y="821.2" width="10.5" height="3.6" rx="1.8"/><rect x="1897.5" y="821.2" width="10.5" height="3.6" rx="1.8"/><rect x="1877" y="827.6" width="10.5" height="3.6" rx="1.8"/><rect x="1897.5" y="827.6" width="10.5" height="3.6" rx="1.8"/><rect x="1877" y="833.9" width="10.5" height="3.6" rx="1.8"/><rect x="1897.5" y="833.9" width="10.5" height="3.6" rx="1.8"/><rect x="1877" y="840.2" width="10.5" height="3.6" rx="1.8"/><rect x="1897.5" y="840.2" width="10.5" height="3.6" rx="1.8"/><rect x="1877" y="846.6" width="10.5" height="3.6" rx="1.8"/><rect x="1897.5" y="846.6" width="10.5" height="3.6" rx="1.8"/><rect x="1877" y="852.9" width="10.5" height="3.6" rx="1.8"/><rect x="1897.5" y="852.9" width="10.5" height="3.6" rx="1.8"/><rect x="1877" y="859.2" width="10.5" height="3.6" rx="1.8"/><rect x="1897.5" y="859.2" width="10.5" height="3.6" rx="1.8"/><rect x="1877" y="865.5" width="10.5" height="3.6" rx="1.8"/><rect x="1897.5" y="865.5" width="10.5" height="3.6" rx="1.8"/><rect x="1877" y="871.9" width="10.5" height="3.6" rx="1.8"/><rect x="1897.5" y="871.9" width="10.5" height="3.6" rx="1.8"/><rect x="1877" y="878.2" width="10.5" height="3.6" rx="1.8"/><rect x="1897.5" y="878.2" width="10.5" height="3.6" rx="1.8"/><rect x="1877" y="884.5" width="10.5" height="3.6" rx="1.8"/><rect x="1897.5" y="884.5" width="10.5" height="3.6" rx="1.8"/><rect x="1877" y="890.9" width="10.5" height="3.6" rx="1.8"/><rect x="1897.5" y="890.9" width="10.5" height="3.6" rx="1.8"/><rect x="1877" y="897.2" width="10.5" height="3.6" rx="1.8"/><rect x="1897.5" y="897.2" width="10.5" height="3.6" rx="1.8"/><rect x="1877" y="903.5" width="10.5" height="3.6" rx="1.8"/><rect x="1897.5" y="903.5" width="10.5" height="3.6" rx="1.8"/><rect x="1877" y="909.9" width="10.5" height="3.6" rx="1.8"/><rect x="1897.5" y="909.9" width="10.5" height="3.6" rx="1.8"/><rect x="1877" y="916.2" width="10.5" height="3.6" rx="1.8"/><rect x="1897.5" y="916.2" width="10.5" height="3.6" rx="1.8"/><rect x="1877" y="922.5" width="10.5" height="3.6" rx="1.8"/><rect x="1897.5" y="922.5" width="10.5" height="3.6" rx="1.8"/><rect x="1877" y="928.8" width="10.5" height="3.6" rx="1.8"/><rect x="1897.5" y="928.8" width="10.5" height="3.6" rx="1.8"/><rect x="1877" y="935.2" width="10.5" height="3.6" rx="1.8"/><rect x="1897.5" y="935.2" width="10.5" height="3.6" rx="1.8"/><rect x="1877" y="941.5" width="10.5" height="3.6" rx="1.8"/><rect x="1897.5" y="941.5" width="10.5" height="3.6" rx="1.8"/><rect x="1877" y="947.8" width="10.5" height="3.6" rx="1.8"/><rect x="1897.5" y="947.8" width="10.5" height="3.6" rx="1.8"/><rect x="1877" y="954.2" width="10.5" height="3.6" rx="1.8"/><rect x="1897.5" y="954.2" width="10.5" height="3.6" rx="1.8"/><rect x="1877" y="960.5" width="10.5" height="3.6" rx="1.8"/><rect x="1897.5" y="960.5" width="10.5" height="3.6" rx="1.8"/><rect x="1877" y="966.8" width="10.5" height="3.6" rx="1.8"/><rect x="1897.5" y="966.8" width="10.5" height="3.6" rx="1.8"/><rect x="1877" y="973.2" width="10.5" height="3.6" rx="1.8"/><rect x="1897.5" y="973.2" width="10.5" height="3.6" rx="1.8"/><rect x="1877" y="979.5" width="10.5" height="3.6" rx="1.8"/><rect x="1897.5" y="979.5" width="10.5" height="3.6" rx="1.8"/><rect x="1877" y="985.8" width="10.5" height="3.6" rx="1.8"/><rect x="1897.5" y="985.8" width="10.5" height="3.6" rx="1.8"/><rect x="1877" y="992.1" width="10.5" height="3.6" rx="1.8"/><rect x="1897.5" y="992.1" width="10.5" height="3.6" rx="1.8"/><rect x="1877" y="998.5" width="10.5" height="3.6" rx="1.8"/><rect x="1897.5" y="998.5" width="10.5" height="3.6" rx="1.8"/><rect x="1877" y="1004.8" width="10.5" height="3.6" rx="1.8"/><rect x="1897.5" y="1004.8" width="10.5" height="3.6" rx="1.8"/><rect x="1877" y="1011.1" width="10.5" height="3.6" rx="1.8"/><rect x="1897.5" y="1011.1" width="10.5" height="3.6" rx="1.8"/><rect x="1877" y="1017.5" width="10.5" height="3.6" rx="1.8"/><rect x="1897.5" y="1017.5" width="10.5" height="3.6" rx="1.8"/><rect x="1877" y="1023.8" width="10.5" height="3.6" rx="1.8"/><rect x="1897.5" y="1023.8" width="10.5" height="3.6" rx="1.8"/><rect x="1877" y="1030.1" width="10.5" height="3.6" rx="1.8"/><rect x="1897.5" y="1030.1" width="10.5" height="3.6" rx="1.8"/><rect x="1877" y="611" width="10.5" height="3.6" rx="1.8"/><rect x="1897.5" y="611" width="10.5" height="3.6" rx="1.8"/></g>
<path d="M1867.5 626H1872M1867.5 681.5H1872M1867.5 738H1872M1867.5 793.5H1872M1867.5 850H1872M1867.5 914.5H1872M1867.5 977.5H1872" stroke="#7d7e8c" stroke-width="1.3"/>
<g fill="#55566a"><rect x="1870.8" y="636.5" width="1.3" height="1.3"/><rect x="1870.8" y="647.6" width="1.3" height="1.3"/><rect x="1870.8" y="658.7" width="1.3" height="1.3"/><rect x="1870.8" y="669.8" width="1.3" height="1.3"/><rect x="1870.8" y="692.2" width="1.3" height="1.3"/><rect x="1870.8" y="703.5" width="1.3" height="1.3"/><rect x="1870.8" y="714.8" width="1.3" height="1.3"/><rect x="1870.8" y="726.1" width="1.3" height="1.3"/><rect x="1870.8" y="748.5" width="1.3" height="1.3"/><rect x="1870.8" y="759.6" width="1.3" height="1.3"/><rect x="1870.8" y="770.7" width="1.3" height="1.3"/><rect x="1870.8" y="781.8" width="1.3" height="1.3"/><rect x="1870.8" y="804.2" width="1.3" height="1.3"/><rect x="1870.8" y="815.5" width="1.3" height="1.3"/><rect x="1870.8" y="826.8" width="1.3" height="1.3"/><rect x="1870.8" y="838.1" width="1.3" height="1.3"/></g>
<path d="M1868.5 1052V1080" stroke="#2c2d35" stroke-width="1"/>
<g fill="#6a6c80">
<rect x="1884" y="1056" width="11" height="2"/><rect x="1897" y="1056" width="11" height="2"/>
<rect x="1884" y="1060" width="11" height="2"/><rect x="1897" y="1060" width="11" height="2"/>
<rect x="1884" y="1064" width="11" height="2"/><rect x="1897" y="1064" width="11" height="2"/>
<rect x="1884" y="1068" width="11" height="2"/><rect x="1897" y="1068" width="11" height="2"/>
<rect x="1884" y="1072" width="11" height="2"/><rect x="1897" y="1072" width="11" height="2"/>
<rect x="1884" y="1076" width="11" height="2"/><rect x="1897" y="1076" width="11" height="2"/>
</g>
</svg>
<div class="t" style="right:58.5px;top:619.5px;font-size:12px;color:#7d7e8c">0</div>
<div class="t" style="right:58.5px;top:675.0px;font-size:12px;color:#7d7e8c">-5</div>
<div class="t" style="right:58.5px;top:731.5px;font-size:12px;color:#7d7e8c">-10</div>
<div class="t" style="right:58.5px;top:787.0px;font-size:12px;color:#7d7e8c">-15</div>
<div class="t" style="right:58.5px;top:843.5px;font-size:12px;color:#7d7e8c">-20</div>
<div class="t" style="right:58.5px;top:908.0px;font-size:12px;color:#7d7e8c">-30</div>
<div class="t" style="right:58.5px;top:971.0px;font-size:12px;color:#7d7e8c">-40</div>
<div class="t" style="left:1879px;top:1035.5px;font-size:12.5px;color:#7d7e8c">L</div>
<div class="t" style="left:1899px;top:1035.5px;font-size:12.5px;color:#7d7e8c">R</div>

<!-- PLAYHEAD -->
<div class="a" style="left:138px;top:588px;width:1.8px;height:453px;background:#d55f58"></div>
<svg class="ic" style="left:130px;top:569px" width="20" height="30"><path d="M2 4.6Q2 1.7 5 1.7H13Q16 1.7 16 4.6V18.2L9 22.8L2 18.2Z" fill="#ef625b"/></svg>


</body></html>
